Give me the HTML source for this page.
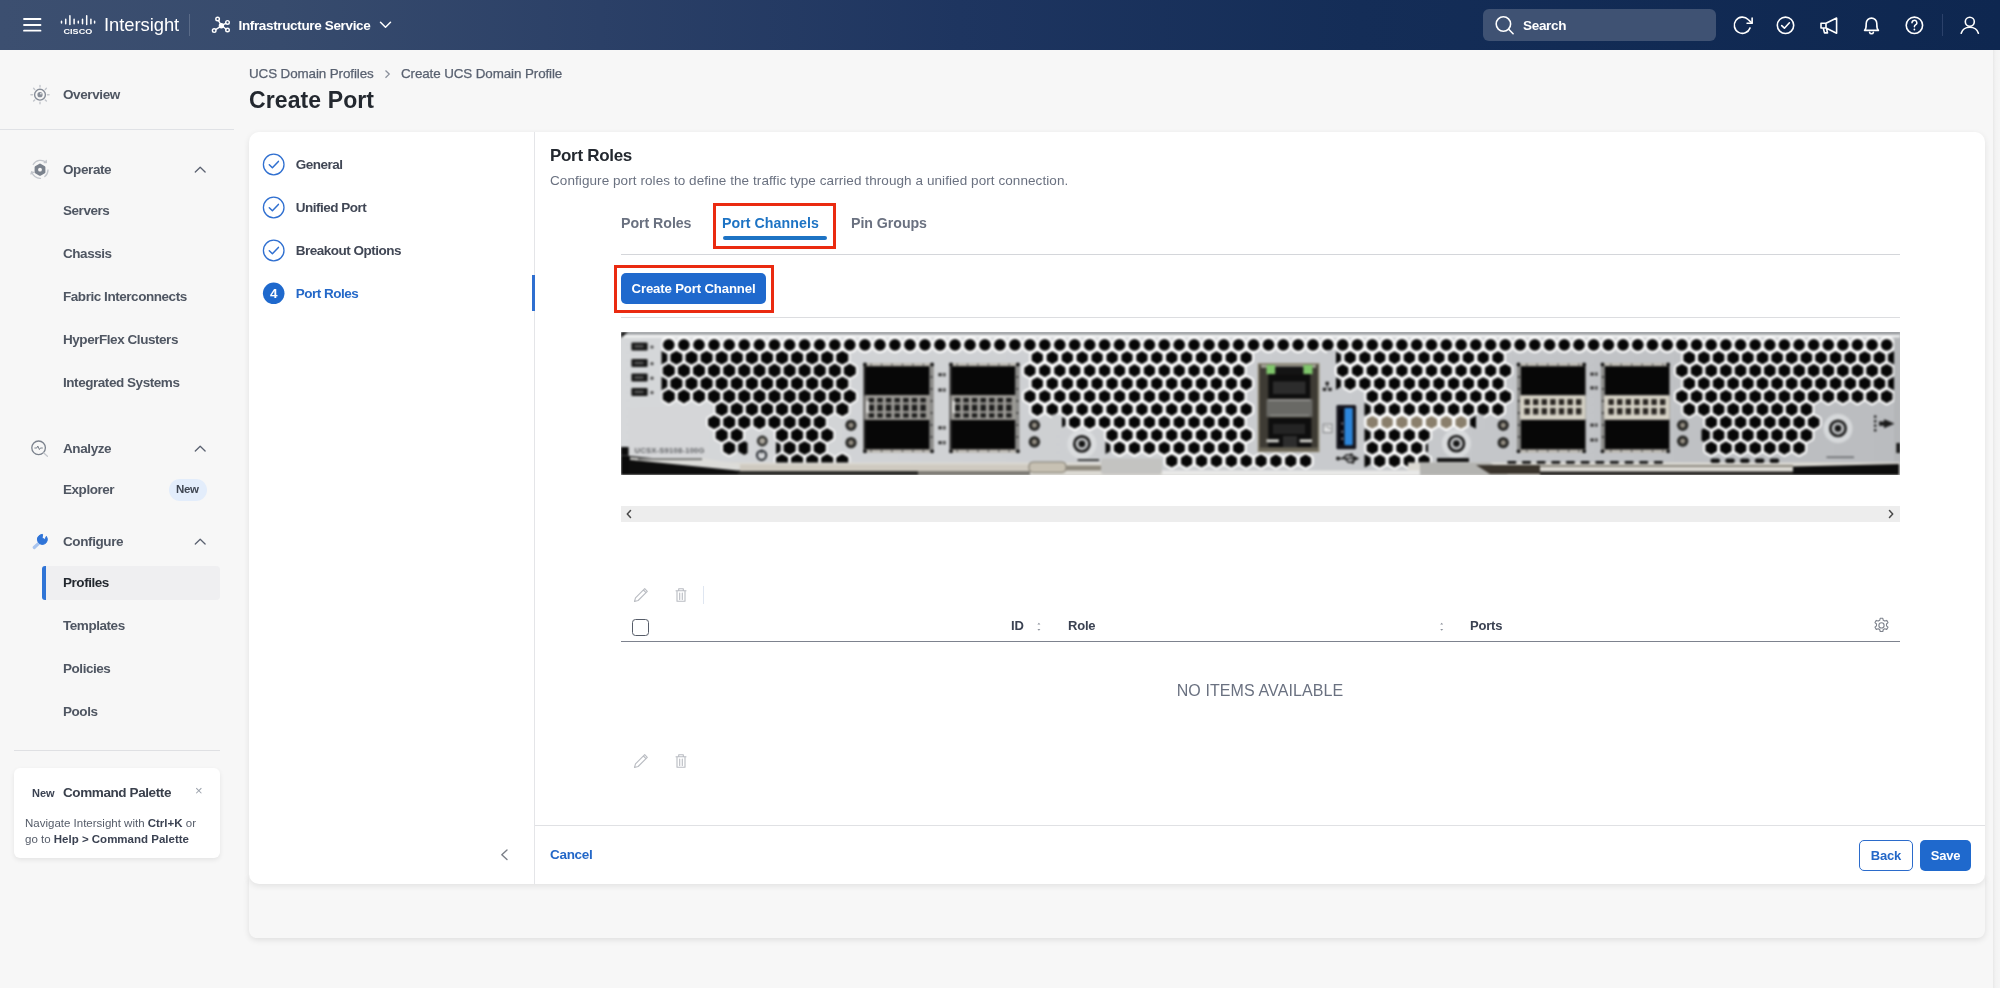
<!DOCTYPE html>
<html>
<head>
<meta charset="utf-8">
<title>Create Port</title>
<style>
*{box-sizing:border-box;margin:0;padding:0}
html,body{width:2000px;height:988px;overflow:hidden;background:#f7f7f7;font-family:"Liberation Sans",sans-serif;color:#3b4252}
.abs{position:absolute}
#hdr{position:absolute;left:0;top:0;width:2000px;height:50px;background:linear-gradient(90deg,#3c4f70 0%,#374b6d 14%,#2b4067 30%,#1e3560 48%,#142d57 68%,#0e2750 100%)}
#hdr .t{position:absolute;color:#fff;white-space:nowrap}
#side{position:absolute;left:0;top:50px;width:234px;height:938px;background:#f7f7f7}
.nav{position:absolute;left:63px;font-size:13.5px;font-weight:bold;color:#4f5662;white-space:nowrap;letter-spacing:-0.45px}
.navh{position:absolute;left:63px;font-size:13.5px;font-weight:bold;color:#4f5662;white-space:nowrap;letter-spacing:-0.4px}
.step{position:absolute;left:295.700px;font-size:13.5px;font-weight:bold;color:#414755;white-space:nowrap;letter-spacing:-0.5px}
.th{position:absolute;top:618px;font-size:13px;font-weight:bold;color:#3b4252;letter-spacing:-0.2px}
</style>
</head>
<body>
<div id="root" style="position:absolute;left:0;top:0;width:2000px;height:988px;will-change:transform;transform:translateZ(0)">
<!-- HEADER -->
<div id="hdr">
  <div class="t" style="left:104px;top:14px;font-size:18.4px;letter-spacing:-0.05px">Intersight</div>
  <div class="abs" style="left:189px;top:14px;width:1px;height:22px;background:#5a6b88"></div>
  <div class="t" style="left:238.5px;top:18px;font-size:13.5px;font-weight:bold;letter-spacing:-0.35px">Infrastructure Service</div>
  <div class="abs" style="left:1483px;top:9px;width:233px;height:32px;border-radius:6px;background:#3f5273"></div>
  <div class="t" style="left:1523px;top:18px;font-size:13.5px;font-weight:bold;letter-spacing:-0.3px">Search</div>
  <div class="abs" style="left:1942px;top:14px;width:1px;height:22px;background:#2b416a"></div>
  <svg class="abs" style="left:0;top:0" width="2000" height="50" viewBox="0 0 2000 50" fill="none" stroke="#fff" stroke-width="1.6" stroke-linecap="round" stroke-linejoin="round">
    <path d="M24 19h16.5M24 25h16.5M24 30.7h16.5" stroke-width="1.8"/>
    <g stroke-width="1.5"><path d="M61.5 21.3v1.8M65.7 19.2v4.6M69.9 15.8v8.7M74.1 19.2v4.6M78.3 21.3v1.8M82.5 19.2v4.6M86.7 15.8v8.7M90.9 19.2v4.6M94.6 21.3v1.8"/></g>
    <text x="63.6" y="33.6" font-family="Liberation Sans, sans-serif" font-size="7.6" font-weight="bold" fill="#fff" stroke="none" textLength="28.6" lengthAdjust="spacingAndGlyphs">CISCO</text>
    <g stroke-width="1.4"><path d="M218.5 20.6l2 3.4M223.2 24.7l2.6-1.4M223.2 26.8l2.7 2.2M219.6 27.2l-4 2.4"/><circle cx="217.6" cy="19" r="1.8"/><circle cx="227.5" cy="22.4" r="1.8"/><circle cx="227.5" cy="30" r="1.8"/><circle cx="214.2" cy="30.6" r="1.8"/><circle cx="221.4" cy="25.7" r="2" fill="#fff"/></g>
    <path d="M380.5 22.3l5 5 5-5" stroke-width="1.5"/>
    <circle cx="1503.4" cy="24" r="7.2"/><path d="M1508.7 29.3l4.4 4.4"/>
    <g transform="translate(1731.6 14.4) scale(.9)" stroke-width="1.8"><path d="M20.49 15a9 9 0 1 1-2.12-9.360L22.600 9.600"/><path d="M22.800 4.200v5.600h-5.600"/></g>
    <circle cx="1785.5" cy="25.3" r="8.2"/><path d="M1781.7 25.6l2.7 2.6 5-5.4"/>
    <path d="M1821 23.2h5l10.6-5.2v15.2l-10.6-5.2h-5zM1826 23.2v4.8M1823.3 28.3l1.2 4.6h3l-1-4.6"/>
    <path d="M1864.600 30.400c1.800-1.700 1.600-3.800 1.600-7a5.300 5.300 0 0 1 10.600 0c0 3.200-.2 5.300 1.600 7zM1869.600 32.400a2 2 0 0 0 3.800 0"/>
    <circle cx="1914.4" cy="25.300" r="8.200"/><path d="M1912 22.800a2.400 2.400 0 1 1 3.500 2.100c-.8.500-1.100.9-1.100 1.900" stroke-width="1.5"/><circle cx="1914.400" cy="29.500" r=".9" fill="#fff" stroke="none"/>
    <circle cx="1969.800" cy="21.800" r="4.500"/><path d="M1961.200 33.200c1.200-3.800 4.600-6 8.600-6s7.400 2.200 8.600 6"/>
  </svg>
</div>

<!-- SIDEBAR -->
<div id="side"></div>
<svg class="abs" style="left:0;top:50px" width="234" height="938" viewBox="0 50 234 938" fill="none" stroke-linecap="round" stroke-linejoin="round">
  <g stroke="#c3c6cc" stroke-width="1.400"><path d="M40 85.500v1.600M40 102.200v1.600M30.900 94.700h1.600M47.500 94.700h1.600M33.600 88.300l1.100 1.100M45.300 100l1.100 1.100M46.400 88.300l-1.100 1.100M34.700 100l-1.100 1.100"/></g>
  <circle cx="40" cy="94.700" r="5.400" stroke="#878d98" stroke-width="1.400"/><circle cx="40" cy="94.700" r="2.600" fill="#878d98"/><circle cx="40.900" cy="93.800" r=".8" fill="#f7f7f7"/>
  <g stroke="#c3c6cc" stroke-width="1.300"><path d="M33.200 164.500a8.600 8.600 0 0 1 12.800-2.200M48 170a8.600 8.600 0 0 1-3.200 6.600M40.500 178.300a8.600 8.600 0 0 1-8.800-6.600M46.200 160.300l.2 2.200-2.200.2M31 174l.6-2.200 2.200.6"/></g>
  <path d="M40 164.700l4.300 2.500v5l-4.300 2.500-4.300-2.500v-5z" stroke="#7b828d" stroke-width="2.200" fill="#7b828d"/><circle cx="40" cy="169.700" r="1.900" fill="#f7f7f7"/>
  <circle cx="38.600" cy="447.800" r="6.800" stroke="#7b828d" stroke-width="1.300"/><path d="M34.800 448h2l1-2 1.600 3.600 1-1.600h2" stroke="#7b828d" stroke-width="1"/><path d="M43.800 453l3.600 3.200" stroke="#c3c6cc" stroke-width="1.300"/>
  <path d="M39.800 542.300l-5.600 5.200" stroke="#a9c5ef" stroke-width="3.200"/>
  <path d="M46.600 536.700a5 5 0 1 1-4-2.300l-.5 3.400 2.300 1.600z" fill="#2f74d8" stroke="#2f74d8" stroke-width="1"/>
  <g stroke="#5a6170" stroke-width="1.300"><path d="M195.300 172l4.900-4.700 4.900 4.700M195.300 451l4.900-4.700 4.900 4.700M195.300 544l4.900-4.700 4.900 4.700"/></g>
</svg>
<div class="abs" style="left:0;top:129px;width:234px;height:1px;background:#e0e2e6"></div>
<div class="navh" style="top:87px;font-size:13.5px">Overview</div>
<div class="navh" style="top:162px">Operate</div>
<div class="nav" style="top:203px">Servers</div>
<div class="nav" style="top:246px">Chassis</div>
<div class="nav" style="top:289px">Fabric Interconnects</div>
<div class="nav" style="top:332px">HyperFlex Clusters</div>
<div class="nav" style="top:375px">Integrated Systems</div>
<div class="navh" style="top:441px">Analyze</div>
<div class="nav" style="top:482px">Explorer</div>
<div class="abs" style="left:168.500px;top:478.500px;width:38px;height:22px;border-radius:11px;background:#e3edfb"></div>
<div class="abs" style="left:176px;top:483px;font-size:11.500px;font-weight:bold;color:#3f4652;letter-spacing:-0.3px">New</div>
<div class="navh" style="top:534px">Configure</div>
<div class="abs" style="left:42px;top:566px;width:178px;height:34px;border-radius:4px;background:#efeff1"></div>
<div class="abs" style="left:41.500px;top:566px;width:4px;height:34px;border-radius:3px 0 0 3px;background:#2f74d6"></div>
<div class="nav" style="top:575px;color:#23282f">Profiles</div>
<div class="nav" style="top:618px">Templates</div>
<div class="nav" style="top:661px">Policies</div>
<div class="nav" style="top:704px">Pools</div>
<div class="abs" style="left:14px;top:750px;width:206px;height:1px;background:#dfe0e3"></div>
<div class="abs" style="left:14px;top:768px;width:206px;height:90px;border-radius:6px;background:#fff;box-shadow:0 2px 5px rgba(0,0,0,.08)"></div>
<div class="abs" style="left:32px;top:787px;font-size:11px;font-weight:bold;color:#3b4252">New</div>
<div class="abs" style="left:63px;top:785px;font-size:13.5px;font-weight:bold;color:#3a404c;letter-spacing:-0.400px">Command Palette</div>
<div class="abs" style="left:195px;top:783px;font-size:13px;color:#9aa0aa">&#215;</div>
<div class="abs" style="left:25px;top:814.500px;font-size:11.500px;color:#555c69;line-height:16.200px;white-space:nowrap">Navigate Intersight with <b style="color:#3b4252">Ctrl+K</b> or<br>go to <b style="color:#3b4252">Help &gt; Command Palette</b></div>

<!-- BREADCRUMB + TITLE -->
<div class="abs" style="left:249px;top:66px;font-size:13.4px;color:#596170;white-space:nowrap;letter-spacing:-0.1px;-webkit-text-stroke:0.25px #596170">UCS Domain Profiles</div>
<div class="abs" style="left:401px;top:66px;font-size:13.4px;color:#596170;white-space:nowrap;letter-spacing:-0.1px;-webkit-text-stroke:0.25px #596170">Create UCS Domain Profile</div>
<div class="abs" style="left:249px;top:87px;font-size:23px;font-weight:bold;color:#23282f;white-space:nowrap;letter-spacing:0.1px">Create Port</div>

<svg class="abs" style="left:382px;top:68px" width="12" height="12" viewBox="0 0 12 12" fill="none" stroke="#8a909b" stroke-width="1.300"><path d="M3.500 2.500l3.700 3.600-3.700 3.600"/></svg>
<!-- LOWER STRIP -->
<div class="abs" style="left:249px;top:876px;width:1736px;height:62px;border-radius:0 0 8px 8px;background:#f7f7f7;box-shadow:0 2px 6px rgba(0,0,0,.10)"></div>
<!-- CARD -->
<div class="abs" style="left:249px;top:132px;width:1736px;height:752px;border-radius:10px;background:#fff;box-shadow:0 2px 6px rgba(0,0,0,.09)"></div>
<div class="abs" style="left:534px;top:132px;width:1px;height:752px;background:#e4e5e8"></div>
<div class="abs" style="left:532px;top:275px;width:2.500px;height:36px;background:#2f6fd0"></div>

<!-- STEPS -->
<div class="step" style="top:157px">General</div>
<div class="step" style="top:200px">Unified Port</div>
<div class="step" style="top:243px">Breakout Options</div>
<div class="step" style="top:286px;color:#2468c8">Port Roles</div>

<!-- CONTENT -->
<div class="abs" style="left:550px;top:146px;font-size:17px;font-weight:bold;color:#23282f;letter-spacing:-0.3px">Port Roles</div>
<div class="abs" style="left:550px;top:173px;font-size:13.500px;color:#6a7180;white-space:nowrap;letter-spacing:0.075px">Configure port roles to define the traffic type carried through a unified port connection.</div>

<div class="abs" style="left:621px;top:215px;font-size:14.200px;font-weight:bold;color:#6a7180;letter-spacing:-0.050px">Port Roles</div>
<div class="abs" style="left:722px;top:215px;font-size:14.200px;font-weight:bold;color:#1d73c4;letter-spacing:0.050px">Port Channels</div>
<div class="abs" style="left:851px;top:215px;font-size:14.200px;font-weight:bold;color:#6a7180;letter-spacing:-0.050px">Pin Groups</div>
<div class="abs" style="left:722.500px;top:236px;width:104px;height:3.500px;border-radius:2px;background:#1d73c4"></div>
<div class="abs" style="left:621px;top:254px;width:1279px;height:1px;background:#d4d6da"></div>
<div class="abs" style="left:713px;top:203px;width:123px;height:46px;border:3px solid #ea2a10"></div>

<div class="abs" style="left:621px;top:273px;width:145px;height:31px;border-radius:5px;background:#1f69cd"></div>
<div class="abs" style="left:621px;top:281px;width:145px;text-align:center;font-size:13.200px;font-weight:bold;color:#fff;letter-spacing:-0.150px">Create Port Channel</div>
<div class="abs" style="left:614px;top:265px;width:160px;height:48px;border:3px solid #ea2a10"></div>
<div class="abs" style="left:621px;top:317px;width:1279px;height:1px;background:#dcdde0"></div>

<!-- HARDWARE -->
<!--HW0--><svg width="1279" height="143" viewBox="621 332 1279 143" style="position:absolute;left:621px;top:332px;display:block">
<defs>
<linearGradient id="mt" x1="0" y1="0" x2="1" y2="0"><stop offset="0" stop-color="#d6d8da"/><stop offset=".5" stop-color="#cacccf"/><stop offset="1" stop-color="#babcbf"/></linearGradient>
<radialGradient id="led"><stop offset="0" stop-color="#a39d91"/><stop offset=".40" stop-color="#857f75"/><stop offset=".52" stop-color="#222220"/><stop offset=".92" stop-color="#2c2c2a"/><stop offset="1" stop-color="#6a6c6d"/></radialGradient>
<radialGradient id="scr"><stop offset="0" stop-color="#77797c"/><stop offset=".30" stop-color="#8d8f92"/><stop offset=".36" stop-color="#303234"/><stop offset=".52" stop-color="#4a4c4e"/><stop offset=".58" stop-color="#dfe0e1"/><stop offset=".85" stop-color="#d9dadb"/><stop offset="1" stop-color="#c8cacc" stop-opacity="0"/></radialGradient>
<filter id="bl" x="0" y="0" width="1" height="1" color-interpolation-filters="sRGB"><feGaussianBlur stdDeviation="0.8"/></filter>
<clipPath id="cp"><path d="M661.5 336H1894V463H1408V469.500H1162V463H661.5z"/></clipPath>
</defs>
<g filter="url(#bl)">
<rect x="616" y="327" width="1289" height="153" fill="url(#mt)"/>
<rect x="621" y="332" width="1279" height="2.6" fill="#8d9093"/>
<rect x="621" y="334.6" width="1279" height="3" fill="#f1f2f2"/>
<path d="M621 332h7l-7 6z" fill="#111"/>
<rect x="629.5" y="407.5" width="79.5" height="51" fill="#d5d6d8"/>
<g clip-path="url(#cp)">
<g fill="#ffffff" stroke="#ffffff" stroke-width="7" stroke-linejoin="round">
<path d="M676.4 352.5l4.50 2.60v5.20l-4.50 2.60l-4.50 -2.60v-5.20zM691.5 352.5l4.50 2.60v5.20l-4.50 2.60l-4.50 -2.60v-5.20zM706.6 352.5l4.50 2.60v5.20l-4.50 2.60l-4.50 -2.60v-5.20zM721.7 352.5l4.50 2.60v5.20l-4.50 2.60l-4.50 -2.60v-5.20zM736.8 352.5l4.50 2.60v5.20l-4.50 2.60l-4.50 -2.60v-5.20zM751.9 352.5l4.50 2.60v5.20l-4.50 2.60l-4.50 -2.60v-5.20zM767.0 352.5l4.50 2.60v5.20l-4.50 2.60l-4.50 -2.60v-5.20zM782.0 352.5l4.50 2.60v5.20l-4.50 2.60l-4.50 -2.60v-5.20zM797.1 352.5l4.50 2.60v5.20l-4.50 2.60l-4.50 -2.60v-5.20zM812.2 352.5l4.50 2.60v5.20l-4.50 2.60l-4.50 -2.60v-5.20zM827.2 352.5l4.50 2.60v5.20l-4.50 2.60l-4.50 -2.60v-5.20zM842.3 352.5l4.50 2.60v5.20l-4.50 2.60l-4.50 -2.60v-5.20zM1037.3 352.5l4.50 2.60v5.20l-4.50 2.60l-4.50 -2.60v-5.20zM1052.3 352.5l4.50 2.60v5.20l-4.50 2.60l-4.50 -2.60v-5.20zM1067.3 352.5l4.50 2.60v5.20l-4.50 2.60l-4.50 -2.60v-5.20zM1082.2 352.5l4.50 2.60v5.20l-4.50 2.60l-4.50 -2.60v-5.20zM1097.1 352.5l4.50 2.60v5.20l-4.50 2.60l-4.50 -2.60v-5.20zM1112.1 352.5l4.50 2.60v5.20l-4.50 2.60l-4.50 -2.60v-5.20zM1127.0 352.5l4.50 2.60v5.20l-4.50 2.60l-4.50 -2.60v-5.20zM1141.9 352.5l4.50 2.60v5.20l-4.50 2.60l-4.50 -2.60v-5.20zM1156.8 352.5l4.50 2.60v5.20l-4.50 2.60l-4.50 -2.60v-5.20zM1171.7 352.5l4.50 2.60v5.20l-4.50 2.60l-4.50 -2.60v-5.20zM1186.6 352.5l4.50 2.60v5.20l-4.50 2.60l-4.50 -2.60v-5.20zM1201.5 352.5l4.50 2.60v5.20l-4.50 2.60l-4.50 -2.60v-5.20zM1216.4 352.5l4.50 2.60v5.20l-4.50 2.60l-4.50 -2.60v-5.20zM1231.3 352.5l4.50 2.60v5.20l-4.50 2.60l-4.50 -2.60v-5.20zM1246.2 352.5l4.50 2.60v5.20l-4.50 2.60l-4.50 -2.60v-5.20zM1350.1 352.5l4.50 2.60v5.20l-4.50 2.60l-4.50 -2.60v-5.20zM1364.9 352.5l4.50 2.60v5.20l-4.50 2.60l-4.50 -2.60v-5.20zM1379.7 352.5l4.50 2.60v5.20l-4.50 2.60l-4.50 -2.60v-5.20zM1394.5 352.5l4.50 2.60v5.20l-4.50 2.60l-4.50 -2.60v-5.20zM1409.3 352.5l4.50 2.60v5.20l-4.50 2.60l-4.50 -2.60v-5.20zM1424.1 352.5l4.50 2.60v5.20l-4.50 2.60l-4.50 -2.60v-5.20zM1438.9 352.5l4.50 2.60v5.20l-4.50 2.60l-4.50 -2.60v-5.20zM1453.7 352.5l4.50 2.60v5.20l-4.50 2.60l-4.50 -2.60v-5.20zM1468.4 352.5l4.50 2.60v5.20l-4.50 2.60l-4.50 -2.60v-5.20zM1483.2 352.5l4.50 2.60v5.20l-4.50 2.60l-4.50 -2.60v-5.20zM1498.0 352.5l4.50 2.60v5.20l-4.50 2.60l-4.50 -2.60v-5.20zM1689.2 352.5l4.50 2.60v5.20l-4.50 2.60l-4.50 -2.60v-5.20zM1703.9 352.5l4.50 2.60v5.20l-4.50 2.60l-4.50 -2.60v-5.20zM1718.6 352.5l4.50 2.60v5.20l-4.50 2.60l-4.50 -2.60v-5.20zM1733.2 352.5l4.50 2.60v5.20l-4.50 2.60l-4.50 -2.60v-5.20zM1747.8 352.5l4.50 2.60v5.20l-4.50 2.60l-4.50 -2.60v-5.20zM1762.5 352.5l4.50 2.60v5.20l-4.50 2.60l-4.50 -2.60v-5.20zM1777.1 352.5l4.50 2.60v5.20l-4.50 2.60l-4.50 -2.60v-5.20zM1791.7 352.5l4.50 2.60v5.20l-4.50 2.60l-4.50 -2.60v-5.20zM1806.4 352.5l4.50 2.60v5.20l-4.50 2.60l-4.50 -2.60v-5.20zM1821.0 352.5l4.50 2.60v5.20l-4.50 2.60l-4.50 -2.60v-5.20zM1835.6 352.5l4.50 2.60v5.20l-4.50 2.60l-4.50 -2.60v-5.20zM1850.2 352.5l4.50 2.60v5.20l-4.50 2.60l-4.50 -2.60v-5.20zM1864.8 352.5l4.50 2.60v5.20l-4.50 2.60l-4.50 -2.60v-5.20zM1879.4 352.5l4.50 2.60v5.20l-4.50 2.60l-4.50 -2.60v-5.20zM668.8 365.4l4.50 2.60v5.20l-4.50 2.60l-4.50 -2.60v-5.20zM683.9 365.4l4.50 2.60v5.20l-4.50 2.60l-4.50 -2.60v-5.20zM699.0 365.4l4.50 2.60v5.20l-4.50 2.60l-4.50 -2.60v-5.20zM714.1 365.4l4.50 2.60v5.20l-4.50 2.60l-4.50 -2.60v-5.20zM729.2 365.4l4.50 2.60v5.20l-4.50 2.60l-4.50 -2.60v-5.20zM744.3 365.4l4.50 2.60v5.20l-4.50 2.60l-4.50 -2.60v-5.20zM759.4 365.4l4.50 2.60v5.20l-4.50 2.60l-4.50 -2.60v-5.20zM774.5 365.4l4.50 2.60v5.20l-4.50 2.60l-4.50 -2.60v-5.20zM789.6 365.4l4.50 2.60v5.20l-4.50 2.60l-4.50 -2.60v-5.20zM804.6 365.4l4.50 2.60v5.20l-4.50 2.60l-4.50 -2.60v-5.20zM819.7 365.4l4.50 2.60v5.20l-4.50 2.60l-4.50 -2.60v-5.20zM834.8 365.4l4.50 2.60v5.20l-4.50 2.60l-4.50 -2.60v-5.20zM849.8 365.4l4.50 2.60v5.20l-4.50 2.60l-4.50 -2.60v-5.20zM1029.9 365.4l4.50 2.60v5.20l-4.50 2.60l-4.50 -2.60v-5.20zM1044.8 365.4l4.50 2.60v5.20l-4.50 2.60l-4.50 -2.60v-5.20zM1059.8 365.4l4.50 2.60v5.20l-4.50 2.60l-4.50 -2.60v-5.20zM1074.7 365.4l4.50 2.60v5.20l-4.50 2.60l-4.50 -2.60v-5.20zM1089.7 365.4l4.50 2.60v5.20l-4.50 2.60l-4.50 -2.60v-5.20zM1104.6 365.4l4.50 2.60v5.20l-4.50 2.60l-4.50 -2.60v-5.20zM1119.5 365.4l4.50 2.60v5.20l-4.50 2.60l-4.50 -2.60v-5.20zM1134.5 365.4l4.50 2.60v5.20l-4.50 2.60l-4.50 -2.60v-5.20zM1149.4 365.4l4.50 2.60v5.20l-4.50 2.60l-4.50 -2.60v-5.20zM1164.3 365.4l4.50 2.60v5.20l-4.50 2.60l-4.50 -2.60v-5.20zM1179.2 365.4l4.50 2.60v5.20l-4.50 2.60l-4.50 -2.60v-5.20zM1194.1 365.4l4.50 2.60v5.20l-4.50 2.60l-4.50 -2.60v-5.20zM1209.0 365.4l4.50 2.60v5.20l-4.50 2.60l-4.50 -2.60v-5.20zM1223.8 365.4l4.50 2.60v5.20l-4.50 2.60l-4.50 -2.60v-5.20zM1238.7 365.4l4.50 2.60v5.20l-4.50 2.60l-4.50 -2.60v-5.20zM1342.7 365.4l4.50 2.60v5.20l-4.50 2.60l-4.50 -2.60v-5.20zM1357.5 365.4l4.50 2.60v5.20l-4.50 2.60l-4.50 -2.60v-5.20zM1372.3 365.4l4.50 2.60v5.20l-4.50 2.60l-4.50 -2.60v-5.20zM1387.1 365.4l4.50 2.60v5.20l-4.50 2.60l-4.50 -2.60v-5.20zM1401.9 365.4l4.50 2.60v5.20l-4.50 2.60l-4.50 -2.60v-5.20zM1416.7 365.4l4.50 2.60v5.20l-4.50 2.60l-4.50 -2.60v-5.20zM1431.5 365.4l4.50 2.60v5.20l-4.50 2.60l-4.50 -2.60v-5.20zM1446.3 365.4l4.50 2.60v5.20l-4.50 2.60l-4.50 -2.60v-5.20zM1461.1 365.4l4.50 2.60v5.20l-4.50 2.60l-4.50 -2.60v-5.20zM1475.8 365.4l4.50 2.60v5.20l-4.50 2.60l-4.50 -2.60v-5.20zM1490.6 365.4l4.50 2.60v5.20l-4.50 2.60l-4.50 -2.60v-5.20zM1505.3 365.4l4.50 2.60v5.20l-4.50 2.60l-4.50 -2.60v-5.20zM1681.9 365.4l4.50 2.60v5.20l-4.50 2.60l-4.50 -2.60v-5.20zM1696.6 365.4l4.50 2.60v5.20l-4.50 2.60l-4.50 -2.60v-5.20zM1711.2 365.4l4.50 2.60v5.20l-4.50 2.60l-4.50 -2.60v-5.20zM1725.9 365.4l4.50 2.60v5.20l-4.50 2.60l-4.50 -2.60v-5.20zM1740.5 365.4l4.50 2.60v5.20l-4.50 2.60l-4.50 -2.60v-5.20zM1755.2 365.4l4.50 2.60v5.20l-4.50 2.60l-4.50 -2.60v-5.20zM1769.8 365.4l4.50 2.60v5.20l-4.50 2.60l-4.50 -2.60v-5.20zM1784.4 365.4l4.50 2.60v5.20l-4.50 2.60l-4.50 -2.60v-5.20zM1799.1 365.4l4.50 2.60v5.20l-4.50 2.60l-4.50 -2.60v-5.20zM1813.7 365.4l4.50 2.60v5.20l-4.50 2.60l-4.50 -2.60v-5.20zM1828.3 365.4l4.50 2.60v5.20l-4.50 2.60l-4.50 -2.60v-5.20zM1842.9 365.4l4.50 2.60v5.20l-4.50 2.60l-4.50 -2.60v-5.20zM1857.5 365.4l4.50 2.60v5.20l-4.50 2.60l-4.50 -2.60v-5.20zM1872.1 365.4l4.50 2.60v5.20l-4.50 2.60l-4.50 -2.60v-5.20zM1886.7 365.4l4.50 2.60v5.20l-4.50 2.60l-4.50 -2.60v-5.20zM676.4 378.3l4.50 2.60v5.20l-4.50 2.60l-4.50 -2.60v-5.20zM691.5 378.3l4.50 2.60v5.20l-4.50 2.60l-4.50 -2.60v-5.20zM706.6 378.3l4.50 2.60v5.20l-4.50 2.60l-4.50 -2.60v-5.20zM721.7 378.3l4.50 2.60v5.20l-4.50 2.60l-4.50 -2.60v-5.20zM736.8 378.3l4.50 2.60v5.20l-4.50 2.60l-4.50 -2.60v-5.20zM751.9 378.3l4.50 2.60v5.20l-4.50 2.60l-4.50 -2.60v-5.20zM767.0 378.3l4.50 2.60v5.20l-4.50 2.60l-4.50 -2.60v-5.20zM782.0 378.3l4.50 2.60v5.20l-4.50 2.60l-4.50 -2.60v-5.20zM797.1 378.3l4.50 2.60v5.20l-4.50 2.60l-4.50 -2.60v-5.20zM812.2 378.3l4.50 2.60v5.20l-4.50 2.60l-4.50 -2.60v-5.20zM827.2 378.3l4.50 2.60v5.20l-4.50 2.60l-4.50 -2.60v-5.20zM842.3 378.3l4.50 2.60v5.20l-4.50 2.60l-4.50 -2.60v-5.20zM1037.3 378.3l4.50 2.60v5.20l-4.50 2.60l-4.50 -2.60v-5.20zM1052.3 378.3l4.50 2.60v5.20l-4.50 2.60l-4.50 -2.60v-5.20zM1067.3 378.3l4.50 2.60v5.20l-4.50 2.60l-4.50 -2.60v-5.20zM1082.2 378.3l4.50 2.60v5.20l-4.50 2.60l-4.50 -2.60v-5.20zM1097.1 378.3l4.50 2.60v5.20l-4.50 2.60l-4.50 -2.60v-5.20zM1112.1 378.3l4.50 2.60v5.20l-4.50 2.60l-4.50 -2.60v-5.20zM1127.0 378.3l4.50 2.60v5.20l-4.50 2.60l-4.50 -2.60v-5.20zM1141.9 378.3l4.50 2.60v5.20l-4.50 2.60l-4.50 -2.60v-5.20zM1156.8 378.3l4.50 2.60v5.20l-4.50 2.60l-4.50 -2.60v-5.20zM1171.7 378.3l4.50 2.60v5.20l-4.50 2.60l-4.50 -2.60v-5.20zM1186.6 378.3l4.50 2.60v5.20l-4.50 2.60l-4.50 -2.60v-5.20zM1201.5 378.3l4.50 2.60v5.20l-4.50 2.60l-4.50 -2.60v-5.20zM1216.4 378.3l4.50 2.60v5.20l-4.50 2.60l-4.50 -2.60v-5.20zM1231.3 378.3l4.50 2.60v5.20l-4.50 2.60l-4.50 -2.60v-5.20zM1246.2 378.3l4.50 2.60v5.20l-4.50 2.60l-4.50 -2.60v-5.20zM1350.1 378.3l4.50 2.60v5.20l-4.50 2.60l-4.50 -2.60v-5.20zM1364.9 378.3l4.50 2.60v5.20l-4.50 2.60l-4.50 -2.60v-5.20zM1379.7 378.3l4.50 2.60v5.20l-4.50 2.60l-4.50 -2.60v-5.20zM1394.5 378.3l4.50 2.60v5.20l-4.50 2.60l-4.50 -2.60v-5.20zM1409.3 378.3l4.50 2.60v5.20l-4.50 2.60l-4.50 -2.60v-5.20zM1424.1 378.3l4.50 2.60v5.20l-4.50 2.60l-4.50 -2.60v-5.20zM1438.9 378.3l4.50 2.60v5.20l-4.50 2.60l-4.50 -2.60v-5.20zM1453.7 378.3l4.50 2.60v5.20l-4.50 2.60l-4.50 -2.60v-5.20zM1468.4 378.3l4.50 2.60v5.20l-4.50 2.60l-4.50 -2.60v-5.20zM1483.2 378.3l4.50 2.60v5.20l-4.50 2.60l-4.50 -2.60v-5.20zM1498.0 378.3l4.50 2.60v5.20l-4.50 2.60l-4.50 -2.60v-5.20zM1689.2 378.3l4.50 2.60v5.20l-4.50 2.60l-4.50 -2.60v-5.20zM1703.9 378.3l4.50 2.60v5.20l-4.50 2.60l-4.50 -2.60v-5.20zM1718.6 378.3l4.50 2.60v5.20l-4.50 2.60l-4.50 -2.60v-5.20zM1733.2 378.3l4.50 2.60v5.20l-4.50 2.60l-4.50 -2.60v-5.20zM1747.8 378.3l4.50 2.60v5.20l-4.50 2.60l-4.50 -2.60v-5.20zM1762.5 378.3l4.50 2.60v5.20l-4.50 2.60l-4.50 -2.60v-5.20zM1777.1 378.3l4.50 2.60v5.20l-4.50 2.60l-4.50 -2.60v-5.20zM1791.7 378.3l4.50 2.60v5.20l-4.50 2.60l-4.50 -2.60v-5.20zM1806.4 378.3l4.50 2.60v5.20l-4.50 2.60l-4.50 -2.60v-5.20zM1821.0 378.3l4.50 2.60v5.20l-4.50 2.60l-4.50 -2.60v-5.20zM1835.6 378.3l4.50 2.60v5.20l-4.50 2.60l-4.50 -2.60v-5.20zM1850.2 378.3l4.50 2.60v5.20l-4.50 2.60l-4.50 -2.60v-5.20zM1864.8 378.3l4.50 2.60v5.20l-4.50 2.60l-4.50 -2.60v-5.20zM1879.4 378.3l4.50 2.60v5.20l-4.50 2.60l-4.50 -2.60v-5.20zM668.8 391.2l4.50 2.60v5.20l-4.50 2.60l-4.50 -2.60v-5.20zM683.9 391.2l4.50 2.60v5.20l-4.50 2.60l-4.50 -2.60v-5.20zM699.0 391.2l4.50 2.60v5.20l-4.50 2.60l-4.50 -2.60v-5.20zM714.1 391.2l4.50 2.60v5.20l-4.50 2.60l-4.50 -2.60v-5.20zM729.2 391.2l4.50 2.60v5.20l-4.50 2.60l-4.50 -2.60v-5.20zM744.3 391.2l4.50 2.60v5.20l-4.50 2.60l-4.50 -2.60v-5.20zM759.4 391.2l4.50 2.60v5.20l-4.50 2.60l-4.50 -2.60v-5.20zM774.5 391.2l4.50 2.60v5.20l-4.50 2.60l-4.50 -2.60v-5.20zM789.6 391.2l4.50 2.60v5.20l-4.50 2.60l-4.50 -2.60v-5.20zM804.6 391.2l4.50 2.60v5.20l-4.50 2.60l-4.50 -2.60v-5.20zM819.7 391.2l4.50 2.60v5.20l-4.50 2.60l-4.50 -2.60v-5.20zM834.8 391.2l4.50 2.60v5.20l-4.50 2.60l-4.50 -2.60v-5.20zM849.8 391.2l4.50 2.60v5.20l-4.50 2.60l-4.50 -2.60v-5.20zM1029.9 391.2l4.50 2.60v5.20l-4.50 2.60l-4.50 -2.60v-5.20zM1044.8 391.2l4.50 2.60v5.20l-4.50 2.60l-4.50 -2.60v-5.20zM1059.8 391.2l4.50 2.60v5.20l-4.50 2.60l-4.50 -2.60v-5.20zM1074.7 391.2l4.50 2.60v5.20l-4.50 2.60l-4.50 -2.60v-5.20zM1089.7 391.2l4.50 2.60v5.20l-4.50 2.60l-4.50 -2.60v-5.20zM1104.6 391.2l4.50 2.60v5.20l-4.50 2.60l-4.50 -2.60v-5.20zM1119.5 391.2l4.50 2.60v5.20l-4.50 2.60l-4.50 -2.60v-5.20zM1134.5 391.2l4.50 2.60v5.20l-4.50 2.60l-4.50 -2.60v-5.20zM1149.4 391.2l4.50 2.60v5.20l-4.50 2.60l-4.50 -2.60v-5.20zM1164.3 391.2l4.50 2.60v5.20l-4.50 2.60l-4.50 -2.60v-5.20zM1179.2 391.2l4.50 2.60v5.20l-4.50 2.60l-4.50 -2.60v-5.20zM1194.1 391.2l4.50 2.60v5.20l-4.50 2.60l-4.50 -2.60v-5.20zM1209.0 391.2l4.50 2.60v5.20l-4.50 2.60l-4.50 -2.60v-5.20zM1223.8 391.2l4.50 2.60v5.20l-4.50 2.60l-4.50 -2.60v-5.20zM1238.7 391.2l4.50 2.60v5.20l-4.50 2.60l-4.50 -2.60v-5.20zM1372.3 391.2l4.50 2.60v5.20l-4.50 2.60l-4.50 -2.60v-5.20zM1387.1 391.2l4.50 2.60v5.20l-4.50 2.60l-4.50 -2.60v-5.20zM1401.9 391.2l4.50 2.60v5.20l-4.50 2.60l-4.50 -2.60v-5.20zM1416.7 391.2l4.50 2.60v5.20l-4.50 2.60l-4.50 -2.60v-5.20zM1431.5 391.2l4.50 2.60v5.20l-4.50 2.60l-4.50 -2.60v-5.20zM1446.3 391.2l4.50 2.60v5.20l-4.50 2.60l-4.50 -2.60v-5.20zM1461.1 391.2l4.50 2.60v5.20l-4.50 2.60l-4.50 -2.60v-5.20zM1475.8 391.2l4.50 2.60v5.20l-4.50 2.60l-4.50 -2.60v-5.20zM1490.6 391.2l4.50 2.60v5.20l-4.50 2.60l-4.50 -2.60v-5.20zM1505.3 391.2l4.50 2.60v5.20l-4.50 2.60l-4.50 -2.60v-5.20zM1681.9 391.2l4.50 2.60v5.20l-4.50 2.60l-4.50 -2.60v-5.20zM1696.6 391.2l4.50 2.60v5.20l-4.50 2.60l-4.50 -2.60v-5.20zM1711.2 391.2l4.50 2.60v5.20l-4.50 2.60l-4.50 -2.60v-5.20zM1725.9 391.2l4.50 2.60v5.20l-4.50 2.60l-4.50 -2.60v-5.20zM1740.5 391.2l4.50 2.60v5.20l-4.50 2.60l-4.50 -2.60v-5.20zM1755.2 391.2l4.50 2.60v5.20l-4.50 2.60l-4.50 -2.60v-5.20zM1769.8 391.2l4.50 2.60v5.20l-4.50 2.60l-4.50 -2.60v-5.20zM1784.4 391.2l4.50 2.60v5.20l-4.50 2.60l-4.50 -2.60v-5.20zM1799.1 391.2l4.50 2.60v5.20l-4.50 2.60l-4.50 -2.60v-5.20zM1813.7 391.2l4.50 2.60v5.20l-4.50 2.60l-4.50 -2.60v-5.20zM1828.3 391.2l4.50 2.60v5.20l-4.50 2.60l-4.50 -2.60v-5.20zM1842.9 391.2l4.50 2.60v5.20l-4.50 2.60l-4.50 -2.60v-5.20zM1857.5 391.2l4.50 2.60v5.20l-4.50 2.60l-4.50 -2.60v-5.20zM1872.1 391.2l4.50 2.60v5.20l-4.50 2.60l-4.50 -2.60v-5.20zM1886.7 391.2l4.50 2.60v5.20l-4.50 2.60l-4.50 -2.60v-5.20zM721.7 404.1l4.50 2.60v5.20l-4.50 2.60l-4.50 -2.60v-5.20zM736.8 404.1l4.50 2.60v5.20l-4.50 2.60l-4.50 -2.60v-5.20zM751.9 404.1l4.50 2.60v5.20l-4.50 2.60l-4.50 -2.60v-5.20zM767.0 404.1l4.50 2.60v5.20l-4.50 2.60l-4.50 -2.60v-5.20zM782.0 404.1l4.50 2.60v5.20l-4.50 2.60l-4.50 -2.60v-5.20zM797.1 404.1l4.50 2.60v5.20l-4.50 2.60l-4.50 -2.60v-5.20zM812.2 404.1l4.50 2.60v5.20l-4.50 2.60l-4.50 -2.60v-5.20zM827.2 404.1l4.50 2.60v5.20l-4.50 2.60l-4.50 -2.60v-5.20zM842.3 404.1l4.50 2.60v5.20l-4.50 2.60l-4.50 -2.60v-5.20zM1037.3 404.1l4.50 2.60v5.20l-4.50 2.60l-4.50 -2.60v-5.20zM1052.3 404.1l4.50 2.60v5.20l-4.50 2.60l-4.50 -2.60v-5.20zM1067.3 404.1l4.50 2.60v5.20l-4.50 2.60l-4.50 -2.60v-5.20zM1082.2 404.1l4.50 2.60v5.20l-4.50 2.60l-4.50 -2.60v-5.20zM1097.1 404.1l4.50 2.60v5.20l-4.50 2.60l-4.50 -2.60v-5.20zM1112.1 404.1l4.50 2.60v5.20l-4.50 2.60l-4.50 -2.60v-5.20zM1127.0 404.1l4.50 2.60v5.20l-4.50 2.60l-4.50 -2.60v-5.20zM1141.9 404.1l4.50 2.60v5.20l-4.50 2.60l-4.50 -2.60v-5.20zM1156.8 404.1l4.50 2.60v5.20l-4.50 2.60l-4.50 -2.60v-5.20zM1171.7 404.1l4.50 2.60v5.20l-4.50 2.60l-4.50 -2.60v-5.20zM1186.6 404.1l4.50 2.60v5.20l-4.50 2.60l-4.50 -2.60v-5.20zM1201.5 404.1l4.50 2.60v5.20l-4.50 2.60l-4.50 -2.60v-5.20zM1216.4 404.1l4.50 2.60v5.20l-4.50 2.60l-4.50 -2.60v-5.20zM1231.3 404.1l4.50 2.60v5.20l-4.50 2.60l-4.50 -2.60v-5.20zM1246.2 404.1l4.50 2.60v5.20l-4.50 2.60l-4.50 -2.60v-5.20zM1379.7 404.1l4.50 2.60v5.20l-4.50 2.60l-4.50 -2.60v-5.20zM1394.5 404.1l4.50 2.60v5.20l-4.50 2.60l-4.50 -2.60v-5.20zM1409.3 404.1l4.50 2.60v5.20l-4.50 2.60l-4.50 -2.60v-5.20zM1424.1 404.1l4.50 2.60v5.20l-4.50 2.60l-4.50 -2.60v-5.20zM1438.9 404.1l4.50 2.60v5.20l-4.50 2.60l-4.50 -2.60v-5.20zM1453.7 404.1l4.50 2.60v5.20l-4.50 2.60l-4.50 -2.60v-5.20zM1468.4 404.1l4.50 2.60v5.20l-4.50 2.60l-4.50 -2.60v-5.20zM1483.2 404.1l4.50 2.60v5.20l-4.50 2.60l-4.50 -2.60v-5.20zM1498.0 404.1l4.50 2.60v5.20l-4.50 2.60l-4.50 -2.60v-5.20zM1689.2 404.1l4.50 2.60v5.20l-4.50 2.60l-4.50 -2.60v-5.20zM1703.9 404.1l4.50 2.60v5.20l-4.50 2.60l-4.50 -2.60v-5.20zM1718.6 404.1l4.50 2.60v5.20l-4.50 2.60l-4.50 -2.60v-5.20zM1733.2 404.1l4.50 2.60v5.20l-4.50 2.60l-4.50 -2.60v-5.20zM1747.8 404.1l4.50 2.60v5.20l-4.50 2.60l-4.50 -2.60v-5.20zM1762.5 404.1l4.50 2.60v5.20l-4.50 2.60l-4.50 -2.60v-5.20zM1777.1 404.1l4.50 2.60v5.20l-4.50 2.60l-4.50 -2.60v-5.20zM1791.7 404.1l4.50 2.60v5.20l-4.50 2.60l-4.50 -2.60v-5.20zM1806.4 404.1l4.50 2.60v5.20l-4.50 2.60l-4.50 -2.60v-5.20zM714.1 417.0l4.50 2.60v5.20l-4.50 2.60l-4.50 -2.60v-5.20zM729.2 417.0l4.50 2.60v5.20l-4.50 2.60l-4.50 -2.60v-5.20zM744.3 417.0l4.50 2.60v5.20l-4.50 2.60l-4.50 -2.60v-5.20zM759.4 417.0l4.50 2.60v5.20l-4.50 2.60l-4.50 -2.60v-5.20zM774.5 417.0l4.50 2.60v5.20l-4.50 2.60l-4.50 -2.60v-5.20zM789.6 417.0l4.50 2.60v5.20l-4.50 2.60l-4.50 -2.60v-5.20zM804.6 417.0l4.50 2.60v5.20l-4.50 2.60l-4.50 -2.60v-5.20zM819.7 417.0l4.50 2.60v5.20l-4.50 2.60l-4.50 -2.60v-5.20zM1074.7 417.0l4.50 2.60v5.20l-4.50 2.60l-4.50 -2.60v-5.20zM1089.7 417.0l4.50 2.60v5.20l-4.50 2.60l-4.50 -2.60v-5.20zM1104.6 417.0l4.50 2.60v5.20l-4.50 2.60l-4.50 -2.60v-5.20zM1119.5 417.0l4.50 2.60v5.20l-4.50 2.60l-4.50 -2.60v-5.20zM1134.5 417.0l4.50 2.60v5.20l-4.50 2.60l-4.50 -2.60v-5.20zM1149.4 417.0l4.50 2.60v5.20l-4.50 2.60l-4.50 -2.60v-5.20zM1164.3 417.0l4.50 2.60v5.20l-4.50 2.60l-4.50 -2.60v-5.20zM1179.2 417.0l4.50 2.60v5.20l-4.50 2.60l-4.50 -2.60v-5.20zM1194.1 417.0l4.50 2.60v5.20l-4.50 2.60l-4.50 -2.60v-5.20zM1209.0 417.0l4.50 2.60v5.20l-4.50 2.60l-4.50 -2.60v-5.20zM1223.8 417.0l4.50 2.60v5.20l-4.50 2.60l-4.50 -2.60v-5.20zM1238.7 417.0l4.50 2.60v5.20l-4.50 2.60l-4.50 -2.60v-5.20zM1711.2 417.0l4.50 2.60v5.20l-4.50 2.60l-4.50 -2.60v-5.20zM1725.9 417.0l4.50 2.60v5.20l-4.50 2.60l-4.50 -2.60v-5.20zM1740.5 417.0l4.50 2.60v5.20l-4.50 2.60l-4.50 -2.60v-5.20zM1755.2 417.0l4.50 2.60v5.20l-4.50 2.60l-4.50 -2.60v-5.20zM1769.8 417.0l4.50 2.60v5.20l-4.50 2.60l-4.50 -2.60v-5.20zM1784.4 417.0l4.50 2.60v5.20l-4.50 2.60l-4.50 -2.60v-5.20zM1799.1 417.0l4.50 2.60v5.20l-4.50 2.60l-4.50 -2.60v-5.20zM1813.7 417.0l4.50 2.60v5.20l-4.50 2.60l-4.50 -2.60v-5.20zM721.7 429.9l4.50 2.60v5.20l-4.50 2.60l-4.50 -2.60v-5.20zM736.8 429.9l4.50 2.60v5.20l-4.50 2.60l-4.50 -2.60v-5.20zM782.0 429.9l4.50 2.60v5.20l-4.50 2.60l-4.50 -2.60v-5.20zM797.1 429.9l4.50 2.60v5.20l-4.50 2.60l-4.50 -2.60v-5.20zM812.2 429.9l4.50 2.60v5.20l-4.50 2.60l-4.50 -2.60v-5.20zM827.2 429.9l4.50 2.60v5.20l-4.50 2.60l-4.50 -2.60v-5.20zM1112.1 429.9l4.50 2.60v5.20l-4.50 2.60l-4.50 -2.60v-5.20zM1127.0 429.9l4.50 2.60v5.20l-4.50 2.60l-4.50 -2.60v-5.20zM1141.9 429.9l4.50 2.60v5.20l-4.50 2.60l-4.50 -2.60v-5.20zM1156.8 429.9l4.50 2.60v5.20l-4.50 2.60l-4.50 -2.60v-5.20zM1171.7 429.9l4.50 2.60v5.20l-4.50 2.60l-4.50 -2.60v-5.20zM1186.6 429.9l4.50 2.60v5.20l-4.50 2.60l-4.50 -2.60v-5.20zM1201.5 429.9l4.50 2.60v5.20l-4.50 2.60l-4.50 -2.60v-5.20zM1216.4 429.9l4.50 2.60v5.20l-4.50 2.60l-4.50 -2.60v-5.20zM1231.3 429.9l4.50 2.60v5.20l-4.50 2.60l-4.50 -2.60v-5.20zM1246.2 429.9l4.50 2.60v5.20l-4.50 2.60l-4.50 -2.60v-5.20zM1379.7 429.9l4.50 2.60v5.20l-4.50 2.60l-4.50 -2.60v-5.20zM1394.5 429.9l4.50 2.60v5.20l-4.50 2.60l-4.50 -2.60v-5.20zM1409.3 429.9l4.50 2.60v5.20l-4.50 2.60l-4.50 -2.60v-5.20zM1424.1 429.9l4.50 2.60v5.20l-4.50 2.60l-4.50 -2.60v-5.20zM1718.6 429.9l4.50 2.60v5.20l-4.50 2.60l-4.50 -2.60v-5.20zM1733.2 429.9l4.50 2.60v5.20l-4.50 2.60l-4.50 -2.60v-5.20zM1747.8 429.9l4.50 2.60v5.20l-4.50 2.60l-4.50 -2.60v-5.20zM1762.5 429.9l4.50 2.60v5.20l-4.50 2.60l-4.50 -2.60v-5.20zM1777.1 429.9l4.50 2.60v5.20l-4.50 2.60l-4.50 -2.60v-5.20zM1791.7 429.9l4.50 2.60v5.20l-4.50 2.60l-4.50 -2.60v-5.20zM1806.4 429.9l4.50 2.60v5.20l-4.50 2.60l-4.50 -2.60v-5.20zM729.2 442.8l4.50 2.60v5.20l-4.50 2.60l-4.50 -2.60v-5.20zM789.6 442.8l4.50 2.60v5.20l-4.50 2.60l-4.50 -2.60v-5.20zM804.6 442.8l4.50 2.60v5.20l-4.50 2.60l-4.50 -2.60v-5.20zM819.7 442.8l4.50 2.60v5.20l-4.50 2.60l-4.50 -2.60v-5.20zM1119.5 442.8l4.50 2.60v5.20l-4.50 2.60l-4.50 -2.60v-5.20zM1134.5 442.8l4.50 2.60v5.20l-4.50 2.60l-4.50 -2.60v-5.20zM1149.4 442.8l4.50 2.60v5.20l-4.50 2.60l-4.50 -2.60v-5.20zM1164.3 442.8l4.50 2.60v5.20l-4.50 2.60l-4.50 -2.60v-5.20zM1179.2 442.8l4.50 2.60v5.20l-4.50 2.60l-4.50 -2.60v-5.20zM1194.1 442.8l4.50 2.60v5.20l-4.50 2.60l-4.50 -2.60v-5.20zM1209.0 442.8l4.50 2.60v5.20l-4.50 2.60l-4.50 -2.60v-5.20zM1223.8 442.8l4.50 2.60v5.20l-4.50 2.60l-4.50 -2.60v-5.20zM1238.7 442.8l4.50 2.60v5.20l-4.50 2.60l-4.50 -2.60v-5.20zM1372.3 442.8l4.50 2.60v5.20l-4.50 2.60l-4.50 -2.60v-5.20zM1387.1 442.8l4.50 2.60v5.20l-4.50 2.60l-4.50 -2.60v-5.20zM1401.9 442.8l4.50 2.60v5.20l-4.50 2.60l-4.50 -2.60v-5.20zM1416.7 442.8l4.50 2.60v5.20l-4.50 2.60l-4.50 -2.60v-5.20zM1711.2 442.8l4.50 2.60v5.20l-4.50 2.60l-4.50 -2.60v-5.20zM1725.9 442.8l4.50 2.60v5.20l-4.50 2.60l-4.50 -2.60v-5.20zM1740.5 442.8l4.50 2.60v5.20l-4.50 2.60l-4.50 -2.60v-5.20zM1755.2 442.8l4.50 2.60v5.20l-4.50 2.60l-4.50 -2.60v-5.20zM1769.8 442.8l4.50 2.60v5.20l-4.50 2.60l-4.50 -2.60v-5.20zM1784.4 442.8l4.50 2.60v5.20l-4.50 2.60l-4.50 -2.60v-5.20zM1799.1 442.8l4.50 2.60v5.20l-4.50 2.60l-4.50 -2.60v-5.20zM782.0 455.7l4.50 2.60v5.20l-4.50 2.60l-4.50 -2.60v-5.20zM797.1 455.7l4.50 2.60v5.20l-4.50 2.60l-4.50 -2.60v-5.20zM812.2 455.7l4.50 2.60v5.20l-4.50 2.60l-4.50 -2.60v-5.20zM827.2 455.7l4.50 2.60v5.20l-4.50 2.60l-4.50 -2.60v-5.20zM842.3 455.7l4.50 2.60v5.20l-4.50 2.60l-4.50 -2.60v-5.20zM1171.7 455.7l4.50 2.60v5.20l-4.50 2.60l-4.50 -2.60v-5.20zM1186.6 455.7l4.50 2.60v5.20l-4.50 2.60l-4.50 -2.60v-5.20zM1201.5 455.7l4.50 2.60v5.20l-4.50 2.60l-4.50 -2.60v-5.20zM1216.4 455.7l4.50 2.60v5.20l-4.50 2.60l-4.50 -2.60v-5.20zM1231.3 455.7l4.50 2.60v5.20l-4.50 2.60l-4.50 -2.60v-5.20zM1246.2 455.7l4.50 2.60v5.20l-4.50 2.60l-4.50 -2.60v-5.20zM1261.0 455.7l4.50 2.60v5.20l-4.50 2.60l-4.50 -2.60v-5.20zM1275.9 455.7l4.50 2.60v5.20l-4.50 2.60l-4.50 -2.60v-5.20zM1290.7 455.7l4.50 2.60v5.20l-4.50 2.60l-4.50 -2.60v-5.20zM1305.6 455.7l4.50 2.60v5.20l-4.50 2.60l-4.50 -2.60v-5.20zM1379.7 455.7l4.50 2.60v5.20l-4.50 2.60l-4.50 -2.60v-5.20zM1394.5 455.7l4.50 2.60v5.20l-4.50 2.60l-4.50 -2.60v-5.20zM1409.3 455.7l4.50 2.60v5.20l-4.50 2.60l-4.50 -2.60v-5.20zM1424.1 455.7l4.50 2.60v5.20l-4.50 2.60l-4.50 -2.60v-5.20zM1372.3 417.0l4.50 2.60v5.20l-4.50 2.60l-4.50 -2.60v-5.20zM1387.1 417.0l4.50 2.60v5.20l-4.50 2.60l-4.50 -2.60v-5.20zM1401.9 417.0l4.50 2.60v5.20l-4.50 2.60l-4.50 -2.60v-5.20zM1416.7 417.0l4.50 2.60v5.20l-4.50 2.60l-4.50 -2.60v-5.20zM1431.5 417.0l4.50 2.60v5.20l-4.50 2.60l-4.50 -2.60v-5.20zM1446.3 417.0l4.50 2.60v5.20l-4.50 2.60l-4.50 -2.60v-5.20zM1461.1 417.0l4.50 2.60v5.20l-4.50 2.60l-4.50 -2.60v-5.20z"/>
</g>
<g fill="#ffffff">
<circle cx="668.8" cy="344.8" r="8.4"/>
<circle cx="683.9" cy="344.8" r="8.4"/>
<circle cx="699.0" cy="344.8" r="8.4"/>
<circle cx="714.1" cy="344.8" r="8.4"/>
<circle cx="729.2" cy="344.8" r="8.4"/>
<circle cx="744.3" cy="344.8" r="8.4"/>
<circle cx="759.4" cy="344.8" r="8.4"/>
<circle cx="774.5" cy="344.8" r="8.4"/>
<circle cx="789.6" cy="344.8" r="8.4"/>
<circle cx="804.6" cy="344.8" r="8.4"/>
<circle cx="819.7" cy="344.8" r="8.4"/>
<circle cx="834.8" cy="344.8" r="8.4"/>
<circle cx="849.8" cy="344.8" r="8.4"/>
<circle cx="864.9" cy="344.8" r="8.4"/>
<circle cx="879.9" cy="344.8" r="8.4"/>
<circle cx="894.9" cy="344.8" r="8.4"/>
<circle cx="909.9" cy="344.8" r="8.4"/>
<circle cx="924.9" cy="344.8" r="8.4"/>
<circle cx="940.0" cy="344.8" r="8.4"/>
<circle cx="955.0" cy="344.8" r="8.4"/>
<circle cx="970.0" cy="344.8" r="8.4"/>
<circle cx="984.9" cy="344.8" r="8.4"/>
<circle cx="999.9" cy="344.8" r="8.4"/>
<circle cx="1014.9" cy="344.8" r="8.4"/>
<circle cx="1029.9" cy="344.8" r="8.4"/>
<circle cx="1044.8" cy="344.8" r="8.4"/>
<circle cx="1059.8" cy="344.8" r="8.4"/>
<circle cx="1074.7" cy="344.8" r="8.4"/>
<circle cx="1089.7" cy="344.8" r="8.4"/>
<circle cx="1104.6" cy="344.8" r="8.4"/>
<circle cx="1119.5" cy="344.8" r="8.4"/>
<circle cx="1134.5" cy="344.8" r="8.4"/>
<circle cx="1149.4" cy="344.8" r="8.4"/>
<circle cx="1164.3" cy="344.8" r="8.4"/>
<circle cx="1179.2" cy="344.8" r="8.4"/>
<circle cx="1194.1" cy="344.8" r="8.4"/>
<circle cx="1209.0" cy="344.8" r="8.4"/>
<circle cx="1223.8" cy="344.8" r="8.4"/>
<circle cx="1238.7" cy="344.8" r="8.4"/>
<circle cx="1253.6" cy="344.8" r="8.4"/>
<circle cx="1268.5" cy="344.8" r="8.4"/>
<circle cx="1283.3" cy="344.8" r="8.4"/>
<circle cx="1298.2" cy="344.8" r="8.4"/>
<circle cx="1313.0" cy="344.8" r="8.4"/>
<circle cx="1327.8" cy="344.8" r="8.4"/>
<circle cx="1342.7" cy="344.8" r="8.4"/>
<circle cx="1357.5" cy="344.8" r="8.4"/>
<circle cx="1372.3" cy="344.8" r="8.4"/>
<circle cx="1387.1" cy="344.8" r="8.4"/>
<circle cx="1401.9" cy="344.8" r="8.4"/>
<circle cx="1416.7" cy="344.8" r="8.4"/>
<circle cx="1431.5" cy="344.8" r="8.4"/>
<circle cx="1446.3" cy="344.8" r="8.4"/>
<circle cx="1461.1" cy="344.8" r="8.4"/>
<circle cx="1475.8" cy="344.8" r="8.4"/>
<circle cx="1490.6" cy="344.8" r="8.4"/>
<circle cx="1505.3" cy="344.8" r="8.4"/>
<circle cx="1520.1" cy="344.8" r="8.4"/>
<circle cx="1534.8" cy="344.8" r="8.4"/>
<circle cx="1549.6" cy="344.8" r="8.4"/>
<circle cx="1564.3" cy="344.8" r="8.4"/>
<circle cx="1579.0" cy="344.8" r="8.4"/>
<circle cx="1593.7" cy="344.8" r="8.4"/>
<circle cx="1608.4" cy="344.8" r="8.4"/>
<circle cx="1623.1" cy="344.8" r="8.4"/>
<circle cx="1637.8" cy="344.8" r="8.4"/>
<circle cx="1652.5" cy="344.8" r="8.4"/>
<circle cx="1667.2" cy="344.8" r="8.4"/>
<circle cx="1681.9" cy="344.8" r="8.4"/>
<circle cx="1696.6" cy="344.8" r="8.4"/>
<circle cx="1711.2" cy="344.8" r="8.4"/>
<circle cx="1725.9" cy="344.8" r="8.4"/>
<circle cx="1740.5" cy="344.8" r="8.4"/>
<circle cx="1755.2" cy="344.8" r="8.4"/>
<circle cx="1769.8" cy="344.8" r="8.4"/>
<circle cx="1784.4" cy="344.8" r="8.4"/>
<circle cx="1799.1" cy="344.8" r="8.4"/>
<circle cx="1813.7" cy="344.8" r="8.4"/>
<circle cx="1828.3" cy="344.8" r="8.4"/>
<circle cx="1842.9" cy="344.8" r="8.4"/>
<circle cx="1857.5" cy="344.8" r="8.4"/>
<circle cx="1872.1" cy="344.8" r="8.4"/>
<circle cx="1886.7" cy="344.8" r="8.4"/>
</g>
<g fill="#060606">
<circle cx="668.8" cy="344.8" r="5.9"/>
<circle cx="683.9" cy="344.8" r="5.9"/>
<circle cx="699.0" cy="344.8" r="5.9"/>
<circle cx="714.1" cy="344.8" r="5.9"/>
<circle cx="729.2" cy="344.8" r="5.9"/>
<circle cx="744.3" cy="344.8" r="5.9"/>
<circle cx="759.4" cy="344.8" r="5.9"/>
<circle cx="774.5" cy="344.8" r="5.9"/>
<circle cx="789.6" cy="344.8" r="5.9"/>
<circle cx="804.6" cy="344.8" r="5.9"/>
<circle cx="819.7" cy="344.8" r="5.9"/>
<circle cx="834.8" cy="344.8" r="5.9"/>
<circle cx="849.8" cy="344.8" r="5.9"/>
<circle cx="864.9" cy="344.8" r="5.9"/>
<circle cx="879.9" cy="344.8" r="5.9"/>
<circle cx="894.9" cy="344.8" r="5.9"/>
<circle cx="909.9" cy="344.8" r="5.9"/>
<circle cx="924.9" cy="344.8" r="5.9"/>
<circle cx="940.0" cy="344.8" r="5.9"/>
<circle cx="955.0" cy="344.8" r="5.9"/>
<circle cx="970.0" cy="344.8" r="5.9"/>
<circle cx="984.9" cy="344.8" r="5.9"/>
<circle cx="999.9" cy="344.8" r="5.9"/>
<circle cx="1014.9" cy="344.8" r="5.9"/>
<circle cx="1029.9" cy="344.8" r="5.9"/>
<circle cx="1044.8" cy="344.8" r="5.9"/>
<circle cx="1059.8" cy="344.8" r="5.9"/>
<circle cx="1074.7" cy="344.8" r="5.9"/>
<circle cx="1089.7" cy="344.8" r="5.9"/>
<circle cx="1104.6" cy="344.8" r="5.9"/>
<circle cx="1119.5" cy="344.8" r="5.9"/>
<circle cx="1134.5" cy="344.8" r="5.9"/>
<circle cx="1149.4" cy="344.8" r="5.9"/>
<circle cx="1164.3" cy="344.8" r="5.9"/>
<circle cx="1179.2" cy="344.8" r="5.9"/>
<circle cx="1194.1" cy="344.8" r="5.9"/>
<circle cx="1209.0" cy="344.8" r="5.9"/>
<circle cx="1223.8" cy="344.8" r="5.9"/>
<circle cx="1238.7" cy="344.8" r="5.9"/>
<circle cx="1253.6" cy="344.8" r="5.9"/>
<circle cx="1268.5" cy="344.8" r="5.9"/>
<circle cx="1283.3" cy="344.8" r="5.9"/>
<circle cx="1298.2" cy="344.8" r="5.9"/>
<circle cx="1313.0" cy="344.8" r="5.9"/>
<circle cx="1327.8" cy="344.8" r="5.9"/>
<circle cx="1342.7" cy="344.8" r="5.9"/>
<circle cx="1357.5" cy="344.8" r="5.9"/>
<circle cx="1372.3" cy="344.8" r="5.9"/>
<circle cx="1387.1" cy="344.8" r="5.9"/>
<circle cx="1401.9" cy="344.8" r="5.9"/>
<circle cx="1416.7" cy="344.8" r="5.9"/>
<circle cx="1431.5" cy="344.8" r="5.9"/>
<circle cx="1446.3" cy="344.8" r="5.9"/>
<circle cx="1461.1" cy="344.8" r="5.9"/>
<circle cx="1475.8" cy="344.8" r="5.9"/>
<circle cx="1490.6" cy="344.8" r="5.9"/>
<circle cx="1505.3" cy="344.8" r="5.9"/>
<circle cx="1520.1" cy="344.8" r="5.9"/>
<circle cx="1534.8" cy="344.8" r="5.9"/>
<circle cx="1549.6" cy="344.8" r="5.9"/>
<circle cx="1564.3" cy="344.8" r="5.9"/>
<circle cx="1579.0" cy="344.8" r="5.9"/>
<circle cx="1593.7" cy="344.8" r="5.9"/>
<circle cx="1608.4" cy="344.8" r="5.9"/>
<circle cx="1623.1" cy="344.8" r="5.9"/>
<circle cx="1637.8" cy="344.8" r="5.9"/>
<circle cx="1652.5" cy="344.8" r="5.9"/>
<circle cx="1667.2" cy="344.8" r="5.9"/>
<circle cx="1681.9" cy="344.8" r="5.9"/>
<circle cx="1696.6" cy="344.8" r="5.9"/>
<circle cx="1711.2" cy="344.8" r="5.9"/>
<circle cx="1725.9" cy="344.8" r="5.9"/>
<circle cx="1740.5" cy="344.8" r="5.9"/>
<circle cx="1755.2" cy="344.8" r="5.9"/>
<circle cx="1769.8" cy="344.8" r="5.9"/>
<circle cx="1784.4" cy="344.8" r="5.9"/>
<circle cx="1799.1" cy="344.8" r="5.9"/>
<circle cx="1813.7" cy="344.8" r="5.9"/>
<circle cx="1828.3" cy="344.8" r="5.9"/>
<circle cx="1842.9" cy="344.8" r="5.9"/>
<circle cx="1857.5" cy="344.8" r="5.9"/>
<circle cx="1872.1" cy="344.8" r="5.9"/>
<circle cx="1886.7" cy="344.8" r="5.9"/>
</g>
<g fill="#060606" stroke="#060606" stroke-width="3.1" stroke-linejoin="round">
<path d="M676.4 352.5l4.50 2.60v5.20l-4.50 2.60l-4.50 -2.60v-5.20zM691.5 352.5l4.50 2.60v5.20l-4.50 2.60l-4.50 -2.60v-5.20zM706.6 352.5l4.50 2.60v5.20l-4.50 2.60l-4.50 -2.60v-5.20zM721.7 352.5l4.50 2.60v5.20l-4.50 2.60l-4.50 -2.60v-5.20zM736.8 352.5l4.50 2.60v5.20l-4.50 2.60l-4.50 -2.60v-5.20zM751.9 352.5l4.50 2.60v5.20l-4.50 2.60l-4.50 -2.60v-5.20zM767.0 352.5l4.50 2.60v5.20l-4.50 2.60l-4.50 -2.60v-5.20zM782.0 352.5l4.50 2.60v5.20l-4.50 2.60l-4.50 -2.60v-5.20zM797.1 352.5l4.50 2.60v5.20l-4.50 2.60l-4.50 -2.60v-5.20zM812.2 352.5l4.50 2.60v5.20l-4.50 2.60l-4.50 -2.60v-5.20zM827.2 352.5l4.50 2.60v5.20l-4.50 2.60l-4.50 -2.60v-5.20zM842.3 352.5l4.50 2.60v5.20l-4.50 2.60l-4.50 -2.60v-5.20zM1037.3 352.9l4.11 2.38v4.75l-4.11 2.38l-4.11 -2.38v-4.75zM1052.3 352.9l4.11 2.38v4.75l-4.11 2.38l-4.11 -2.38v-4.75zM1067.3 352.9l4.11 2.38v4.75l-4.11 2.38l-4.11 -2.38v-4.75zM1082.2 352.9l4.11 2.38v4.75l-4.11 2.38l-4.11 -2.38v-4.75zM1097.1 352.9l4.11 2.38v4.75l-4.11 2.38l-4.11 -2.38v-4.75zM1112.1 352.9l4.11 2.38v4.75l-4.11 2.38l-4.11 -2.38v-4.75zM1127.0 352.9l4.11 2.38v4.75l-4.11 2.38l-4.11 -2.38v-4.75zM1141.9 352.9l4.11 2.38v4.75l-4.11 2.38l-4.11 -2.38v-4.75zM1156.8 352.9l4.11 2.38v4.75l-4.11 2.38l-4.11 -2.38v-4.75zM1171.7 352.9l4.11 2.38v4.75l-4.11 2.38l-4.11 -2.38v-4.75zM1186.6 352.9l4.11 2.38v4.75l-4.11 2.38l-4.11 -2.38v-4.75zM1201.5 352.9l4.11 2.38v4.75l-4.11 2.38l-4.11 -2.38v-4.75zM1216.4 352.9l4.11 2.38v4.75l-4.11 2.38l-4.11 -2.38v-4.75zM1231.3 352.9l4.11 2.38v4.75l-4.11 2.38l-4.11 -2.38v-4.75zM1246.2 352.9l4.11 2.38v4.75l-4.11 2.38l-4.11 -2.38v-4.75zM1350.1 352.9l4.11 2.38v4.75l-4.11 2.38l-4.11 -2.38v-4.75zM1364.9 352.9l4.11 2.38v4.75l-4.11 2.38l-4.11 -2.38v-4.75zM1379.7 352.9l4.11 2.38v4.75l-4.11 2.38l-4.11 -2.38v-4.75zM1394.5 352.9l4.11 2.38v4.75l-4.11 2.38l-4.11 -2.38v-4.75zM1409.3 352.9l4.11 2.38v4.75l-4.11 2.38l-4.11 -2.38v-4.75zM1424.1 352.9l4.11 2.38v4.75l-4.11 2.38l-4.11 -2.38v-4.75zM1438.9 352.9l4.11 2.38v4.75l-4.11 2.38l-4.11 -2.38v-4.75zM1453.7 352.9l4.11 2.38v4.75l-4.11 2.38l-4.11 -2.38v-4.75zM1468.4 352.9l4.11 2.38v4.75l-4.11 2.38l-4.11 -2.38v-4.75zM1483.2 352.9l4.11 2.38v4.75l-4.11 2.38l-4.11 -2.38v-4.75zM1498.0 352.9l4.11 2.38v4.75l-4.11 2.38l-4.11 -2.38v-4.75zM1689.2 352.8l4.29 2.48v4.95l-4.29 2.48l-4.29 -2.48v-4.95zM1703.9 352.8l4.29 2.48v4.95l-4.29 2.48l-4.29 -2.48v-4.95zM1718.6 352.8l4.29 2.48v4.95l-4.29 2.48l-4.29 -2.48v-4.95zM1733.2 352.8l4.29 2.48v4.95l-4.29 2.48l-4.29 -2.48v-4.95zM1747.8 352.8l4.29 2.48v4.95l-4.29 2.48l-4.29 -2.48v-4.95zM1762.5 352.8l4.29 2.48v4.95l-4.29 2.48l-4.29 -2.48v-4.95zM1777.1 352.8l4.29 2.48v4.95l-4.29 2.48l-4.29 -2.48v-4.95zM1791.7 352.8l4.29 2.48v4.95l-4.29 2.48l-4.29 -2.48v-4.95zM1806.4 352.8l4.29 2.48v4.95l-4.29 2.48l-4.29 -2.48v-4.95zM1821.0 352.8l4.29 2.48v4.95l-4.29 2.48l-4.29 -2.48v-4.95zM1835.6 352.8l4.29 2.48v4.95l-4.29 2.48l-4.29 -2.48v-4.95zM1850.2 352.8l4.29 2.48v4.95l-4.29 2.48l-4.29 -2.48v-4.95zM1864.8 352.8l4.29 2.48v4.95l-4.29 2.48l-4.29 -2.48v-4.95zM1879.4 352.8l4.29 2.48v4.95l-4.29 2.48l-4.29 -2.48v-4.95zM668.8 365.4l4.50 2.60v5.20l-4.50 2.60l-4.50 -2.60v-5.20zM683.9 365.4l4.50 2.60v5.20l-4.50 2.60l-4.50 -2.60v-5.20zM699.0 365.4l4.50 2.60v5.20l-4.50 2.60l-4.50 -2.60v-5.20zM714.1 365.4l4.50 2.60v5.20l-4.50 2.60l-4.50 -2.60v-5.20zM729.2 365.4l4.50 2.60v5.20l-4.50 2.60l-4.50 -2.60v-5.20zM744.3 365.4l4.50 2.60v5.20l-4.50 2.60l-4.50 -2.60v-5.20zM759.4 365.4l4.50 2.60v5.20l-4.50 2.60l-4.50 -2.60v-5.20zM774.5 365.4l4.50 2.60v5.20l-4.50 2.60l-4.50 -2.60v-5.20zM789.6 365.4l4.50 2.60v5.20l-4.50 2.60l-4.50 -2.60v-5.20zM804.6 365.4l4.50 2.60v5.20l-4.50 2.60l-4.50 -2.60v-5.20zM819.7 365.4l4.50 2.60v5.20l-4.50 2.60l-4.50 -2.60v-5.20zM834.8 365.4l4.50 2.60v5.20l-4.50 2.60l-4.50 -2.60v-5.20zM849.8 365.4l4.50 2.60v5.20l-4.50 2.60l-4.50 -2.60v-5.20zM1029.9 365.9l4.11 2.38v4.75l-4.11 2.38l-4.11 -2.38v-4.75zM1044.8 365.9l4.11 2.38v4.75l-4.11 2.38l-4.11 -2.38v-4.75zM1059.8 365.9l4.11 2.38v4.75l-4.11 2.38l-4.11 -2.38v-4.75zM1074.7 365.9l4.11 2.38v4.75l-4.11 2.38l-4.11 -2.38v-4.75zM1089.7 365.9l4.11 2.38v4.75l-4.11 2.38l-4.11 -2.38v-4.75zM1104.6 365.9l4.11 2.38v4.75l-4.11 2.38l-4.11 -2.38v-4.75zM1119.5 365.9l4.11 2.38v4.75l-4.11 2.38l-4.11 -2.38v-4.75zM1134.5 365.9l4.11 2.38v4.75l-4.11 2.38l-4.11 -2.38v-4.75zM1149.4 365.9l4.11 2.38v4.75l-4.11 2.38l-4.11 -2.38v-4.75zM1164.3 365.9l4.11 2.38v4.75l-4.11 2.38l-4.11 -2.38v-4.75zM1179.2 365.9l4.11 2.38v4.75l-4.11 2.38l-4.11 -2.38v-4.75zM1194.1 365.9l4.11 2.38v4.75l-4.11 2.38l-4.11 -2.38v-4.75zM1209.0 365.9l4.11 2.38v4.75l-4.11 2.38l-4.11 -2.38v-4.75zM1223.8 365.9l4.11 2.38v4.75l-4.11 2.38l-4.11 -2.38v-4.75zM1238.7 365.9l4.11 2.38v4.75l-4.11 2.38l-4.11 -2.38v-4.75zM1342.7 365.9l4.11 2.38v4.75l-4.11 2.38l-4.11 -2.38v-4.75zM1357.5 365.9l4.11 2.38v4.75l-4.11 2.38l-4.11 -2.38v-4.75zM1372.3 365.9l4.11 2.38v4.75l-4.11 2.38l-4.11 -2.38v-4.75zM1387.1 365.9l4.11 2.38v4.75l-4.11 2.38l-4.11 -2.38v-4.75zM1401.9 365.9l4.11 2.38v4.75l-4.11 2.38l-4.11 -2.38v-4.75zM1416.7 365.9l4.11 2.38v4.75l-4.11 2.38l-4.11 -2.38v-4.75zM1431.5 365.9l4.11 2.38v4.75l-4.11 2.38l-4.11 -2.38v-4.75zM1446.3 365.9l4.11 2.38v4.75l-4.11 2.38l-4.11 -2.38v-4.75zM1461.1 365.9l4.11 2.38v4.75l-4.11 2.38l-4.11 -2.38v-4.75zM1475.8 365.9l4.11 2.38v4.75l-4.11 2.38l-4.11 -2.38v-4.75zM1490.6 365.9l4.11 2.38v4.75l-4.11 2.38l-4.11 -2.38v-4.75zM1505.3 365.7l4.29 2.48v4.95l-4.29 2.48l-4.29 -2.48v-4.95zM1681.9 365.7l4.29 2.48v4.95l-4.29 2.48l-4.29 -2.48v-4.95zM1696.6 365.7l4.29 2.48v4.95l-4.29 2.48l-4.29 -2.48v-4.95zM1711.2 365.7l4.29 2.48v4.95l-4.29 2.48l-4.29 -2.48v-4.95zM1725.9 365.7l4.29 2.48v4.95l-4.29 2.48l-4.29 -2.48v-4.95zM1740.5 365.7l4.29 2.48v4.95l-4.29 2.48l-4.29 -2.48v-4.95zM1755.2 365.7l4.29 2.48v4.95l-4.29 2.48l-4.29 -2.48v-4.95zM1769.8 365.7l4.29 2.48v4.95l-4.29 2.48l-4.29 -2.48v-4.95zM1784.4 365.7l4.29 2.48v4.95l-4.29 2.48l-4.29 -2.48v-4.95zM1799.1 365.7l4.29 2.48v4.95l-4.29 2.48l-4.29 -2.48v-4.95zM1813.7 365.7l4.29 2.48v4.95l-4.29 2.48l-4.29 -2.48v-4.95zM1828.3 365.7l4.29 2.48v4.95l-4.29 2.48l-4.29 -2.48v-4.95zM1842.9 365.7l4.29 2.48v4.95l-4.29 2.48l-4.29 -2.48v-4.95zM1857.5 365.7l4.29 2.48v4.95l-4.29 2.48l-4.29 -2.48v-4.95zM1872.1 365.7l4.29 2.48v4.95l-4.29 2.48l-4.29 -2.48v-4.95zM1886.7 365.7l4.29 2.48v4.95l-4.29 2.48l-4.29 -2.48v-4.95zM676.4 378.3l4.50 2.60v5.20l-4.50 2.60l-4.50 -2.60v-5.20zM691.5 378.3l4.50 2.60v5.20l-4.50 2.60l-4.50 -2.60v-5.20zM706.6 378.3l4.50 2.60v5.20l-4.50 2.60l-4.50 -2.60v-5.20zM721.7 378.3l4.50 2.60v5.20l-4.50 2.60l-4.50 -2.60v-5.20zM736.8 378.3l4.50 2.60v5.20l-4.50 2.60l-4.50 -2.60v-5.20zM751.9 378.3l4.50 2.60v5.20l-4.50 2.60l-4.50 -2.60v-5.20zM767.0 378.3l4.50 2.60v5.20l-4.50 2.60l-4.50 -2.60v-5.20zM782.0 378.3l4.50 2.60v5.20l-4.50 2.60l-4.50 -2.60v-5.20zM797.1 378.3l4.50 2.60v5.20l-4.50 2.60l-4.50 -2.60v-5.20zM812.2 378.3l4.50 2.60v5.20l-4.50 2.60l-4.50 -2.60v-5.20zM827.2 378.3l4.50 2.60v5.20l-4.50 2.60l-4.50 -2.60v-5.20zM842.3 378.3l4.50 2.60v5.20l-4.50 2.60l-4.50 -2.60v-5.20zM1037.3 378.8l4.11 2.38v4.75l-4.11 2.38l-4.11 -2.38v-4.75zM1052.3 378.8l4.11 2.38v4.75l-4.11 2.38l-4.11 -2.38v-4.75zM1067.3 378.8l4.11 2.38v4.75l-4.11 2.38l-4.11 -2.38v-4.75zM1082.2 378.8l4.11 2.38v4.75l-4.11 2.38l-4.11 -2.38v-4.75zM1097.1 378.8l4.11 2.38v4.75l-4.11 2.38l-4.11 -2.38v-4.75zM1112.1 378.8l4.11 2.38v4.75l-4.11 2.38l-4.11 -2.38v-4.75zM1127.0 378.8l4.11 2.38v4.75l-4.11 2.38l-4.11 -2.38v-4.75zM1141.9 378.8l4.11 2.38v4.75l-4.11 2.38l-4.11 -2.38v-4.75zM1156.8 378.8l4.11 2.38v4.75l-4.11 2.38l-4.11 -2.38v-4.75zM1171.7 378.8l4.11 2.38v4.75l-4.11 2.38l-4.11 -2.38v-4.75zM1186.6 378.8l4.11 2.38v4.75l-4.11 2.38l-4.11 -2.38v-4.75zM1201.5 378.8l4.11 2.38v4.75l-4.11 2.38l-4.11 -2.38v-4.75zM1216.4 378.8l4.11 2.38v4.75l-4.11 2.38l-4.11 -2.38v-4.75zM1231.3 378.8l4.11 2.38v4.75l-4.11 2.38l-4.11 -2.38v-4.75zM1246.2 378.8l4.11 2.38v4.75l-4.11 2.38l-4.11 -2.38v-4.75zM1350.1 378.8l4.11 2.38v4.75l-4.11 2.38l-4.11 -2.38v-4.75zM1364.9 378.8l4.11 2.38v4.75l-4.11 2.38l-4.11 -2.38v-4.75zM1379.7 378.8l4.11 2.38v4.75l-4.11 2.38l-4.11 -2.38v-4.75zM1394.5 378.8l4.11 2.38v4.75l-4.11 2.38l-4.11 -2.38v-4.75zM1409.3 378.8l4.11 2.38v4.75l-4.11 2.38l-4.11 -2.38v-4.75zM1424.1 378.8l4.11 2.38v4.75l-4.11 2.38l-4.11 -2.38v-4.75zM1438.9 378.8l4.11 2.38v4.75l-4.11 2.38l-4.11 -2.38v-4.75zM1453.7 378.8l4.11 2.38v4.75l-4.11 2.38l-4.11 -2.38v-4.75zM1468.4 378.8l4.11 2.38v4.75l-4.11 2.38l-4.11 -2.38v-4.75zM1483.2 378.8l4.11 2.38v4.75l-4.11 2.38l-4.11 -2.38v-4.75zM1498.0 378.8l4.11 2.38v4.75l-4.11 2.38l-4.11 -2.38v-4.75zM1689.2 378.6l4.29 2.48v4.95l-4.29 2.48l-4.29 -2.48v-4.95zM1703.9 378.6l4.29 2.48v4.95l-4.29 2.48l-4.29 -2.48v-4.95zM1718.6 378.6l4.29 2.48v4.95l-4.29 2.48l-4.29 -2.48v-4.95zM1733.2 378.6l4.29 2.48v4.95l-4.29 2.48l-4.29 -2.48v-4.95zM1747.8 378.6l4.29 2.48v4.95l-4.29 2.48l-4.29 -2.48v-4.95zM1762.5 378.6l4.29 2.48v4.95l-4.29 2.48l-4.29 -2.48v-4.95zM1777.1 378.6l4.29 2.48v4.95l-4.29 2.48l-4.29 -2.48v-4.95zM1791.7 378.6l4.29 2.48v4.95l-4.29 2.48l-4.29 -2.48v-4.95zM1806.4 378.6l4.29 2.48v4.95l-4.29 2.48l-4.29 -2.48v-4.95zM1821.0 378.6l4.29 2.48v4.95l-4.29 2.48l-4.29 -2.48v-4.95zM1835.6 378.6l4.29 2.48v4.95l-4.29 2.48l-4.29 -2.48v-4.95zM1850.2 378.6l4.29 2.48v4.95l-4.29 2.48l-4.29 -2.48v-4.95zM1864.8 378.6l4.29 2.48v4.95l-4.29 2.48l-4.29 -2.48v-4.95zM1879.4 378.6l4.29 2.48v4.95l-4.29 2.48l-4.29 -2.48v-4.95zM668.8 391.2l4.50 2.60v5.20l-4.50 2.60l-4.50 -2.60v-5.20zM683.9 391.2l4.50 2.60v5.20l-4.50 2.60l-4.50 -2.60v-5.20zM699.0 391.2l4.50 2.60v5.20l-4.50 2.60l-4.50 -2.60v-5.20zM714.1 391.2l4.50 2.60v5.20l-4.50 2.60l-4.50 -2.60v-5.20zM729.2 391.2l4.50 2.60v5.20l-4.50 2.60l-4.50 -2.60v-5.20zM744.3 391.2l4.50 2.60v5.20l-4.50 2.60l-4.50 -2.60v-5.20zM759.4 391.2l4.50 2.60v5.20l-4.50 2.60l-4.50 -2.60v-5.20zM774.5 391.2l4.50 2.60v5.20l-4.50 2.60l-4.50 -2.60v-5.20zM789.6 391.2l4.50 2.60v5.20l-4.50 2.60l-4.50 -2.60v-5.20zM804.6 391.2l4.50 2.60v5.20l-4.50 2.60l-4.50 -2.60v-5.20zM819.7 391.2l4.50 2.60v5.20l-4.50 2.60l-4.50 -2.60v-5.20zM834.8 391.2l4.50 2.60v5.20l-4.50 2.60l-4.50 -2.60v-5.20zM849.8 391.2l4.50 2.60v5.20l-4.50 2.60l-4.50 -2.60v-5.20zM1029.9 391.7l4.11 2.38v4.75l-4.11 2.38l-4.11 -2.38v-4.75zM1044.8 391.7l4.11 2.38v4.75l-4.11 2.38l-4.11 -2.38v-4.75zM1059.8 391.7l4.11 2.38v4.75l-4.11 2.38l-4.11 -2.38v-4.75zM1074.7 391.7l4.11 2.38v4.75l-4.11 2.38l-4.11 -2.38v-4.75zM1089.7 391.7l4.11 2.38v4.75l-4.11 2.38l-4.11 -2.38v-4.75zM1104.6 391.7l4.11 2.38v4.75l-4.11 2.38l-4.11 -2.38v-4.75zM1119.5 391.7l4.11 2.38v4.75l-4.11 2.38l-4.11 -2.38v-4.75zM1134.5 391.7l4.11 2.38v4.75l-4.11 2.38l-4.11 -2.38v-4.75zM1149.4 391.7l4.11 2.38v4.75l-4.11 2.38l-4.11 -2.38v-4.75zM1164.3 391.7l4.11 2.38v4.75l-4.11 2.38l-4.11 -2.38v-4.75zM1179.2 391.7l4.11 2.38v4.75l-4.11 2.38l-4.11 -2.38v-4.75zM1194.1 391.7l4.11 2.38v4.75l-4.11 2.38l-4.11 -2.38v-4.75zM1209.0 391.7l4.11 2.38v4.75l-4.11 2.38l-4.11 -2.38v-4.75zM1223.8 391.7l4.11 2.38v4.75l-4.11 2.38l-4.11 -2.38v-4.75zM1238.7 391.7l4.11 2.38v4.75l-4.11 2.38l-4.11 -2.38v-4.75zM1372.3 391.7l4.11 2.38v4.75l-4.11 2.38l-4.11 -2.38v-4.75zM1387.1 391.7l4.11 2.38v4.75l-4.11 2.38l-4.11 -2.38v-4.75zM1401.9 391.7l4.11 2.38v4.75l-4.11 2.38l-4.11 -2.38v-4.75zM1416.7 391.7l4.11 2.38v4.75l-4.11 2.38l-4.11 -2.38v-4.75zM1431.5 391.7l4.11 2.38v4.75l-4.11 2.38l-4.11 -2.38v-4.75zM1446.3 391.7l4.11 2.38v4.75l-4.11 2.38l-4.11 -2.38v-4.75zM1461.1 391.7l4.11 2.38v4.75l-4.11 2.38l-4.11 -2.38v-4.75zM1475.8 391.7l4.11 2.38v4.75l-4.11 2.38l-4.11 -2.38v-4.75zM1490.6 391.7l4.11 2.38v4.75l-4.11 2.38l-4.11 -2.38v-4.75zM1505.3 391.5l4.29 2.48v4.95l-4.29 2.48l-4.29 -2.48v-4.95zM1681.9 391.5l4.29 2.48v4.95l-4.29 2.48l-4.29 -2.48v-4.95zM1696.6 391.5l4.29 2.48v4.95l-4.29 2.48l-4.29 -2.48v-4.95zM1711.2 391.5l4.29 2.48v4.95l-4.29 2.48l-4.29 -2.48v-4.95zM1725.9 391.5l4.29 2.48v4.95l-4.29 2.48l-4.29 -2.48v-4.95zM1740.5 391.5l4.29 2.48v4.95l-4.29 2.48l-4.29 -2.48v-4.95zM1755.2 391.5l4.29 2.48v4.95l-4.29 2.48l-4.29 -2.48v-4.95zM1769.8 391.5l4.29 2.48v4.95l-4.29 2.48l-4.29 -2.48v-4.95zM1784.4 391.5l4.29 2.48v4.95l-4.29 2.48l-4.29 -2.48v-4.95zM1799.1 391.5l4.29 2.48v4.95l-4.29 2.48l-4.29 -2.48v-4.95zM1813.7 391.5l4.29 2.48v4.95l-4.29 2.48l-4.29 -2.48v-4.95zM1828.3 391.5l4.29 2.48v4.95l-4.29 2.48l-4.29 -2.48v-4.95zM1842.9 391.5l4.29 2.48v4.95l-4.29 2.48l-4.29 -2.48v-4.95zM1857.5 391.5l4.29 2.48v4.95l-4.29 2.48l-4.29 -2.48v-4.95zM1872.1 391.5l4.29 2.48v4.95l-4.29 2.48l-4.29 -2.48v-4.95zM1886.7 391.5l4.29 2.48v4.95l-4.29 2.48l-4.29 -2.48v-4.95zM721.7 404.1l4.50 2.60v5.20l-4.50 2.60l-4.50 -2.60v-5.20zM736.8 404.1l4.50 2.60v5.20l-4.50 2.60l-4.50 -2.60v-5.20zM751.9 404.1l4.50 2.60v5.20l-4.50 2.60l-4.50 -2.60v-5.20zM767.0 404.1l4.50 2.60v5.20l-4.50 2.60l-4.50 -2.60v-5.20zM782.0 404.1l4.50 2.60v5.20l-4.50 2.60l-4.50 -2.60v-5.20zM797.1 404.1l4.50 2.60v5.20l-4.50 2.60l-4.50 -2.60v-5.20zM812.2 404.1l4.50 2.60v5.20l-4.50 2.60l-4.50 -2.60v-5.20zM827.2 404.1l4.50 2.60v5.20l-4.50 2.60l-4.50 -2.60v-5.20zM842.3 404.1l4.50 2.60v5.20l-4.50 2.60l-4.50 -2.60v-5.20zM1037.3 404.6l4.11 2.38v4.75l-4.11 2.38l-4.11 -2.38v-4.75zM1052.3 404.6l4.11 2.38v4.75l-4.11 2.38l-4.11 -2.38v-4.75zM1067.3 404.6l4.11 2.38v4.75l-4.11 2.38l-4.11 -2.38v-4.75zM1082.2 404.6l4.11 2.38v4.75l-4.11 2.38l-4.11 -2.38v-4.75zM1097.1 404.6l4.11 2.38v4.75l-4.11 2.38l-4.11 -2.38v-4.75zM1112.1 404.6l4.11 2.38v4.75l-4.11 2.38l-4.11 -2.38v-4.75zM1127.0 404.6l4.11 2.38v4.75l-4.11 2.38l-4.11 -2.38v-4.75zM1141.9 404.6l4.11 2.38v4.75l-4.11 2.38l-4.11 -2.38v-4.75zM1156.8 404.6l4.11 2.38v4.75l-4.11 2.38l-4.11 -2.38v-4.75zM1171.7 404.6l4.11 2.38v4.75l-4.11 2.38l-4.11 -2.38v-4.75zM1186.6 404.6l4.11 2.38v4.75l-4.11 2.38l-4.11 -2.38v-4.75zM1201.5 404.6l4.11 2.38v4.75l-4.11 2.38l-4.11 -2.38v-4.75zM1216.4 404.6l4.11 2.38v4.75l-4.11 2.38l-4.11 -2.38v-4.75zM1231.3 404.6l4.11 2.38v4.75l-4.11 2.38l-4.11 -2.38v-4.75zM1246.2 404.6l4.11 2.38v4.75l-4.11 2.38l-4.11 -2.38v-4.75zM1379.7 404.6l4.11 2.38v4.75l-4.11 2.38l-4.11 -2.38v-4.75zM1394.5 404.6l4.11 2.38v4.75l-4.11 2.38l-4.11 -2.38v-4.75zM1409.3 404.6l4.11 2.38v4.75l-4.11 2.38l-4.11 -2.38v-4.75zM1424.1 404.6l4.11 2.38v4.75l-4.11 2.38l-4.11 -2.38v-4.75zM1438.9 404.6l4.11 2.38v4.75l-4.11 2.38l-4.11 -2.38v-4.75zM1453.7 404.6l4.11 2.38v4.75l-4.11 2.38l-4.11 -2.38v-4.75zM1468.4 404.6l4.11 2.38v4.75l-4.11 2.38l-4.11 -2.38v-4.75zM1483.2 404.6l4.11 2.38v4.75l-4.11 2.38l-4.11 -2.38v-4.75zM1498.0 404.6l4.11 2.38v4.75l-4.11 2.38l-4.11 -2.38v-4.75zM1689.2 404.4l4.29 2.48v4.95l-4.29 2.48l-4.29 -2.48v-4.95zM1703.9 404.4l4.29 2.48v4.95l-4.29 2.48l-4.29 -2.48v-4.95zM1718.6 404.4l4.29 2.48v4.95l-4.29 2.48l-4.29 -2.48v-4.95zM1733.2 404.4l4.29 2.48v4.95l-4.29 2.48l-4.29 -2.48v-4.95zM1747.8 404.4l4.29 2.48v4.95l-4.29 2.48l-4.29 -2.48v-4.95zM1762.5 404.4l4.29 2.48v4.95l-4.29 2.48l-4.29 -2.48v-4.95zM1777.1 404.4l4.29 2.48v4.95l-4.29 2.48l-4.29 -2.48v-4.95zM1791.7 404.4l4.29 2.48v4.95l-4.29 2.48l-4.29 -2.48v-4.95zM1806.4 404.4l4.29 2.48v4.95l-4.29 2.48l-4.29 -2.48v-4.95zM714.1 417.0l4.50 2.60v5.20l-4.50 2.60l-4.50 -2.60v-5.20zM729.2 417.0l4.50 2.60v5.20l-4.50 2.60l-4.50 -2.60v-5.20zM744.3 417.0l4.50 2.60v5.20l-4.50 2.60l-4.50 -2.60v-5.20zM759.4 417.0l4.50 2.60v5.20l-4.50 2.60l-4.50 -2.60v-5.20zM774.5 417.0l4.50 2.60v5.20l-4.50 2.60l-4.50 -2.60v-5.20zM789.6 417.0l4.50 2.60v5.20l-4.50 2.60l-4.50 -2.60v-5.20zM804.6 417.0l4.50 2.60v5.20l-4.50 2.60l-4.50 -2.60v-5.20zM819.7 417.0l4.50 2.60v5.20l-4.50 2.60l-4.50 -2.60v-5.20zM1074.7 417.5l4.11 2.38v4.75l-4.11 2.38l-4.11 -2.38v-4.75zM1089.7 417.5l4.11 2.38v4.75l-4.11 2.38l-4.11 -2.38v-4.75zM1104.6 417.5l4.11 2.38v4.75l-4.11 2.38l-4.11 -2.38v-4.75zM1119.5 417.5l4.11 2.38v4.75l-4.11 2.38l-4.11 -2.38v-4.75zM1134.5 417.5l4.11 2.38v4.75l-4.11 2.38l-4.11 -2.38v-4.75zM1149.4 417.5l4.11 2.38v4.75l-4.11 2.38l-4.11 -2.38v-4.75zM1164.3 417.5l4.11 2.38v4.75l-4.11 2.38l-4.11 -2.38v-4.75zM1179.2 417.5l4.11 2.38v4.75l-4.11 2.38l-4.11 -2.38v-4.75zM1194.1 417.5l4.11 2.38v4.75l-4.11 2.38l-4.11 -2.38v-4.75zM1209.0 417.5l4.11 2.38v4.75l-4.11 2.38l-4.11 -2.38v-4.75zM1223.8 417.5l4.11 2.38v4.75l-4.11 2.38l-4.11 -2.38v-4.75zM1238.7 417.5l4.11 2.38v4.75l-4.11 2.38l-4.11 -2.38v-4.75zM1711.2 417.3l4.29 2.48v4.95l-4.29 2.48l-4.29 -2.48v-4.95zM1725.9 417.3l4.29 2.48v4.95l-4.29 2.48l-4.29 -2.48v-4.95zM1740.5 417.3l4.29 2.48v4.95l-4.29 2.48l-4.29 -2.48v-4.95zM1755.2 417.3l4.29 2.48v4.95l-4.29 2.48l-4.29 -2.48v-4.95zM1769.8 417.3l4.29 2.48v4.95l-4.29 2.48l-4.29 -2.48v-4.95zM1784.4 417.3l4.29 2.48v4.95l-4.29 2.48l-4.29 -2.48v-4.95zM1799.1 417.3l4.29 2.48v4.95l-4.29 2.48l-4.29 -2.48v-4.95zM1813.7 417.3l4.29 2.48v4.95l-4.29 2.48l-4.29 -2.48v-4.95zM721.7 429.9l4.50 2.60v5.20l-4.50 2.60l-4.50 -2.60v-5.20zM736.8 429.9l4.50 2.60v5.20l-4.50 2.60l-4.50 -2.60v-5.20zM782.0 429.9l4.50 2.60v5.20l-4.50 2.60l-4.50 -2.60v-5.20zM797.1 429.9l4.50 2.60v5.20l-4.50 2.60l-4.50 -2.60v-5.20zM812.2 429.9l4.50 2.60v5.20l-4.50 2.60l-4.50 -2.60v-5.20zM827.2 429.9l4.50 2.60v5.20l-4.50 2.60l-4.50 -2.60v-5.20zM1112.1 430.4l4.11 2.38v4.75l-4.11 2.38l-4.11 -2.38v-4.75zM1127.0 430.4l4.11 2.38v4.75l-4.11 2.38l-4.11 -2.38v-4.75zM1141.9 430.4l4.11 2.38v4.75l-4.11 2.38l-4.11 -2.38v-4.75zM1156.8 430.4l4.11 2.38v4.75l-4.11 2.38l-4.11 -2.38v-4.75zM1171.7 430.4l4.11 2.38v4.75l-4.11 2.38l-4.11 -2.38v-4.75zM1186.6 430.4l4.11 2.38v4.75l-4.11 2.38l-4.11 -2.38v-4.75zM1201.5 430.4l4.11 2.38v4.75l-4.11 2.38l-4.11 -2.38v-4.75zM1216.4 430.4l4.11 2.38v4.75l-4.11 2.38l-4.11 -2.38v-4.75zM1231.3 430.4l4.11 2.38v4.75l-4.11 2.38l-4.11 -2.38v-4.75zM1246.2 430.4l4.11 2.38v4.75l-4.11 2.38l-4.11 -2.38v-4.75zM1379.7 430.4l4.11 2.38v4.75l-4.11 2.38l-4.11 -2.38v-4.75zM1394.5 430.4l4.11 2.38v4.75l-4.11 2.38l-4.11 -2.38v-4.75zM1409.3 430.4l4.11 2.38v4.75l-4.11 2.38l-4.11 -2.38v-4.75zM1424.1 430.4l4.11 2.38v4.75l-4.11 2.38l-4.11 -2.38v-4.75zM1718.6 430.2l4.29 2.48v4.95l-4.29 2.48l-4.29 -2.48v-4.95zM1733.2 430.2l4.29 2.48v4.95l-4.29 2.48l-4.29 -2.48v-4.95zM1747.8 430.2l4.29 2.48v4.95l-4.29 2.48l-4.29 -2.48v-4.95zM1762.5 430.2l4.29 2.48v4.95l-4.29 2.48l-4.29 -2.48v-4.95zM1777.1 430.2l4.29 2.48v4.95l-4.29 2.48l-4.29 -2.48v-4.95zM1791.7 430.2l4.29 2.48v4.95l-4.29 2.48l-4.29 -2.48v-4.95zM1806.4 430.2l4.29 2.48v4.95l-4.29 2.48l-4.29 -2.48v-4.95zM729.2 442.8l4.50 2.60v5.20l-4.50 2.60l-4.50 -2.60v-5.20zM789.6 442.8l4.50 2.60v5.20l-4.50 2.60l-4.50 -2.60v-5.20zM804.6 442.8l4.50 2.60v5.20l-4.50 2.60l-4.50 -2.60v-5.20zM819.7 442.8l4.50 2.60v5.20l-4.50 2.60l-4.50 -2.60v-5.20zM1119.5 443.2l4.11 2.38v4.75l-4.11 2.38l-4.11 -2.38v-4.75zM1134.5 443.2l4.11 2.38v4.75l-4.11 2.38l-4.11 -2.38v-4.75zM1149.4 443.2l4.11 2.38v4.75l-4.11 2.38l-4.11 -2.38v-4.75zM1164.3 443.2l4.11 2.38v4.75l-4.11 2.38l-4.11 -2.38v-4.75zM1179.2 443.2l4.11 2.38v4.75l-4.11 2.38l-4.11 -2.38v-4.75zM1194.1 443.2l4.11 2.38v4.75l-4.11 2.38l-4.11 -2.38v-4.75zM1209.0 443.2l4.11 2.38v4.75l-4.11 2.38l-4.11 -2.38v-4.75zM1223.8 443.2l4.11 2.38v4.75l-4.11 2.38l-4.11 -2.38v-4.75zM1238.7 443.2l4.11 2.38v4.75l-4.11 2.38l-4.11 -2.38v-4.75zM1372.3 443.2l4.11 2.38v4.75l-4.11 2.38l-4.11 -2.38v-4.75zM1387.1 443.2l4.11 2.38v4.75l-4.11 2.38l-4.11 -2.38v-4.75zM1401.9 443.2l4.11 2.38v4.75l-4.11 2.38l-4.11 -2.38v-4.75zM1416.7 443.2l4.11 2.38v4.75l-4.11 2.38l-4.11 -2.38v-4.75zM1711.2 443.1l4.29 2.48v4.95l-4.29 2.48l-4.29 -2.48v-4.95zM1725.9 443.1l4.29 2.48v4.95l-4.29 2.48l-4.29 -2.48v-4.95zM1740.5 443.1l4.29 2.48v4.95l-4.29 2.48l-4.29 -2.48v-4.95zM1755.2 443.1l4.29 2.48v4.95l-4.29 2.48l-4.29 -2.48v-4.95zM1769.8 443.1l4.29 2.48v4.95l-4.29 2.48l-4.29 -2.48v-4.95zM1784.4 443.1l4.29 2.48v4.95l-4.29 2.48l-4.29 -2.48v-4.95zM1799.1 443.1l4.29 2.48v4.95l-4.29 2.48l-4.29 -2.48v-4.95zM782.0 455.7l4.50 2.60v5.20l-4.50 2.60l-4.50 -2.60v-5.20zM797.1 455.7l4.50 2.60v5.20l-4.50 2.60l-4.50 -2.60v-5.20zM812.2 455.7l4.50 2.60v5.20l-4.50 2.60l-4.50 -2.60v-5.20zM827.2 455.7l4.50 2.60v5.20l-4.50 2.60l-4.50 -2.60v-5.20zM842.3 455.7l4.50 2.60v5.20l-4.50 2.60l-4.50 -2.60v-5.20zM1171.7 456.2l4.11 2.38v4.75l-4.11 2.38l-4.11 -2.38v-4.75zM1186.6 456.2l4.11 2.38v4.75l-4.11 2.38l-4.11 -2.38v-4.75zM1201.5 456.2l4.11 2.38v4.75l-4.11 2.38l-4.11 -2.38v-4.75zM1216.4 456.2l4.11 2.38v4.75l-4.11 2.38l-4.11 -2.38v-4.75zM1231.3 456.2l4.11 2.38v4.75l-4.11 2.38l-4.11 -2.38v-4.75zM1246.2 456.2l4.11 2.38v4.75l-4.11 2.38l-4.11 -2.38v-4.75zM1261.0 456.2l4.11 2.38v4.75l-4.11 2.38l-4.11 -2.38v-4.75zM1275.9 456.2l4.11 2.38v4.75l-4.11 2.38l-4.11 -2.38v-4.75zM1290.7 456.2l4.11 2.38v4.75l-4.11 2.38l-4.11 -2.38v-4.75zM1305.6 456.2l4.11 2.38v4.75l-4.11 2.38l-4.11 -2.38v-4.75zM1379.7 456.2l4.11 2.38v4.75l-4.11 2.38l-4.11 -2.38v-4.75zM1394.5 456.2l4.11 2.38v4.75l-4.11 2.38l-4.11 -2.38v-4.75zM1409.3 456.2l4.11 2.38v4.75l-4.11 2.38l-4.11 -2.38v-4.75zM1424.1 456.2l4.11 2.38v4.75l-4.11 2.38l-4.11 -2.38v-4.75z"/>
</g>
<g fill="#8a7f6c" stroke="#8a7f6c" stroke-width="3.1" stroke-linejoin="round">
<path d="M1372.3 417.5l4.11 2.38v4.75l-4.11 2.38l-4.11 -2.38v-4.75zM1387.1 417.5l4.11 2.38v4.75l-4.11 2.38l-4.11 -2.38v-4.75zM1401.9 417.5l4.11 2.38v4.75l-4.11 2.38l-4.11 -2.38v-4.75zM1416.7 417.5l4.11 2.38v4.75l-4.11 2.38l-4.11 -2.38v-4.75zM1431.5 417.5l4.11 2.38v4.75l-4.11 2.38l-4.11 -2.38v-4.75zM1446.3 417.5l4.11 2.38v4.75l-4.11 2.38l-4.11 -2.38v-4.75zM1461.1 417.5l4.11 2.38v4.75l-4.11 2.38l-4.11 -2.38v-4.75z"/>
</g>
</g>
<g fill="#060606" stroke="#060606" stroke-width="3.1" stroke-linejoin="round">
<path d="M661.2 352.5l4.50 2.60v5.20l-4.50 2.60l-4.50 -2.60v-5.20zM661.2 378.3l4.50 2.60v5.20l-4.50 2.60l-4.50 -2.60v-5.20zM1893.9 352.8l4.29 2.48v4.95l-4.29 2.48l-4.29 -2.48v-4.95zM1893.9 378.6l4.29 2.48v4.95l-4.29 2.48l-4.29 -2.48v-4.95zM1335.2 352.9l4.11 2.38v4.75l-4.11 2.38l-4.11 -2.38v-4.75zM1335.2 378.8l4.11 2.38v4.75l-4.11 2.38l-4.11 -2.38v-4.75zM1364.9 404.6l4.11 2.38v4.75l-4.11 2.38l-4.11 -2.38v-4.75zM1364.9 430.4l4.11 2.38v4.75l-4.11 2.38l-4.11 -2.38v-4.75zM1364.9 456.2l4.11 2.38v4.75l-4.11 2.38l-4.11 -2.38v-4.75zM1059.8 417.5l4.11 2.38v4.75l-4.11 2.38l-4.11 -2.38v-4.75zM1104.6 443.2l4.11 2.38v4.75l-4.11 2.38l-4.11 -2.38v-4.75zM1475.8 417.5l4.11 2.38v4.75l-4.11 2.38l-4.11 -2.38v-4.75zM744.3 442.8l4.50 2.60v5.20l-4.50 2.60l-4.50 -2.60v-5.20zM774.5 442.8l4.50 2.60v5.20l-4.50 2.60l-4.50 -2.60v-5.20zM1703.9 430.2l4.29 2.48v4.95l-4.29 2.48l-4.29 -2.48v-4.95zM1431.5 443.2l4.11 2.38v4.75l-4.11 2.38l-4.11 -2.38v-4.75z"/>
</g>
<rect x="653.2" y="350.1" width="8.3" height="15.2" fill="#d5d7d9"/>
<rect x="653.2" y="375.9" width="8.3" height="15.2" fill="#d5d7d9"/>
<rect x="1894.0" y="350.1" width="7.9" height="15.2" fill="#babcbf"/>
<rect x="1894.0" y="375.9" width="7.9" height="15.2" fill="#babcbf"/>
<rect x="1327.2" y="350.1" width="8.8" height="15.2" fill="#c8cacd"/>
<rect x="1327.2" y="375.9" width="8.8" height="15.2" fill="#c8cacd"/>
<rect x="1356.9" y="401.7" width="7.6" height="15.2" fill="#c7c9cc"/>
<rect x="1356.9" y="427.5" width="7.6" height="15.2" fill="#c7c9cc"/>
<rect x="1356.9" y="453.3" width="7.6" height="15.2" fill="#c7c9cc"/>
<rect x="1051.8" y="414.6" width="10.2" height="15.2" fill="#ced0d2"/>
<rect x="1096.6" y="440.4" width="8.9" height="15.2" fill="#cdcfd2"/>
<rect x="1476.0" y="414.6" width="7.8" height="15.2" fill="#c5c7ca"/>
<rect x="747.5" y="440.4" width="4.8" height="15.2" fill="#d4d6d8"/>
<rect x="766.5" y="440.4" width="9.5" height="15.2" fill="#d3d5d7"/>
<rect x="1695.9" y="427.5" width="5.6" height="15.2" fill="#bfc1c4"/>
<rect x="1428.0" y="440.4" width="11.5" height="15.2" fill="#c6c8cb"/>
<rect x="631.4" y="342.4" width="16.2" height="8" rx="1" fill="#161616"/>
<rect x="634.5" y="345.0" width="9" height="2.6" fill="#555"/>
<circle cx="652" cy="347.0" r="1.6" fill="#444"/>
<rect x="631.4" y="359.1" width="16.2" height="8" rx="1" fill="#161616"/>
<rect x="634.5" y="361.70000000000005" width="9" height="2.6" fill="#555"/>
<circle cx="652" cy="363.70000000000005" r="1.6" fill="#444"/>
<rect x="631.4" y="373.6" width="16.2" height="8" rx="1" fill="#161616"/>
<rect x="634.5" y="376.20000000000005" width="9" height="2.6" fill="#555"/>
<circle cx="652" cy="378.20000000000005" r="1.6" fill="#444"/>
<rect x="631.4" y="388.0" width="16.2" height="8" rx="1" fill="#161616"/>
<rect x="634.5" y="390.6" width="9" height="2.6" fill="#555"/>
<circle cx="652" cy="392.6" r="1.6" fill="#444"/>
<text x="634.5" y="452.5" font-family="Liberation Sans, sans-serif" font-size="7.6" font-weight="bold" fill="#5f6164" textLength="70">UCSX-S9108-100G</text>
<rect x="621" y="447" width="7.6" height="8.5" fill="#0b0b0b"/>
<circle cx="762.3" cy="441" r="4.2" fill="#a9a59b" stroke="#2b2b29" stroke-width="2.4"/>
<circle cx="761.6" cy="455.3" r="4.6" fill="#d6d8da" stroke="#20242a" stroke-width="2"/>
<rect x="760.9" y="449.5" width="1.4" height="4" fill="#2d3136"/>
<circle cx="851" cy="425.2" r="5.8" fill="url(#led)"/>
<circle cx="851" cy="442.7" r="5.8" fill="url(#led)"/>
<circle cx="1034.4" cy="425.2" r="5.8" fill="url(#led)"/>
<circle cx="1034.4" cy="441.9" r="5.8" fill="url(#led)"/>
<circle cx="1503.2" cy="425.2" r="5.8" fill="url(#led)"/>
<circle cx="1503.2" cy="442.7" r="5.8" fill="url(#led)"/>
<circle cx="1682.7" cy="425.2" r="5.8" fill="url(#led)"/>
<circle cx="1682.7" cy="441.1" r="5.8" fill="url(#led)"/>
<circle cx="1081.9" cy="443.9" r="14.5" fill="#dfe1e3" opacity=".75"/>
<circle cx="1081.9" cy="443.9" r="7.6" fill="#c2c4c6" stroke="#1c1c1c" stroke-width="2.7"/>
<circle cx="1081.9" cy="443.9" r="3.3" fill="#151515"/>
<circle cx="1456.4" cy="443.6" r="14.5" fill="#dfe1e3" opacity=".75"/>
<circle cx="1456.4" cy="443.6" r="7.6" fill="#c2c4c6" stroke="#1c1c1c" stroke-width="2.7"/>
<circle cx="1456.4" cy="443.6" r="3.3" fill="#151515"/>
<circle cx="1838.0" cy="428.4" r="14.5" fill="#dfe1e3" opacity=".75"/>
<circle cx="1838.0" cy="428.4" r="7.6" fill="#c2c4c6" stroke="#1c1c1c" stroke-width="2.7"/>
<circle cx="1838.0" cy="428.4" r="3.3" fill="#151515"/>
<rect x="863.5" y="363" width="70.1" height="89.8" fill="#bdbab3"/>
<rect x="863.5" y="363" width="1.6" height="89.8" fill="#2a2a2a"/>
<rect x="929.4" y="365" width="4.2" height="86" fill="#8b8b89"/>
<circle cx="931.5" cy="377" r="1" fill="#2a2a2a"/>
<circle cx="931.5" cy="389" r="1" fill="#2a2a2a"/>
<circle cx="931.5" cy="401" r="1" fill="#2a2a2a"/>
<circle cx="931.5" cy="413" r="1" fill="#2a2a2a"/>
<circle cx="931.5" cy="425" r="1" fill="#2a2a2a"/>
<circle cx="931.5" cy="437" r="1" fill="#2a2a2a"/>
<rect x="865.1" y="366.2" width="64.3" height="29" fill="#070707"/>
<rect x="865.1" y="419.8" width="64.3" height="29.6" fill="#070707"/>
<rect x="864.5" y="395.6" width="65.5" height="23.8" fill="#9b9995"/>
<rect x="868.7" y="398" width="5.4" height="4.4" fill="#1d1d1c"/>
<rect x="868.7" y="404.6" width="5.4" height="6.4" fill="#1d1d1c"/>
<rect x="868.7" y="413.2" width="5.4" height="4.4" fill="#1d1d1c"/>
<rect x="877.3" y="398" width="5.4" height="4.4" fill="#1d1d1c"/>
<rect x="877.3" y="404.6" width="5.4" height="6.4" fill="#1d1d1c"/>
<rect x="877.3" y="413.2" width="5.4" height="4.4" fill="#1d1d1c"/>
<rect x="885.9" y="398" width="5.4" height="4.4" fill="#1d1d1c"/>
<rect x="885.9" y="404.6" width="5.4" height="6.4" fill="#1d1d1c"/>
<rect x="885.9" y="413.2" width="5.4" height="4.4" fill="#1d1d1c"/>
<rect x="894.5" y="398" width="5.4" height="4.4" fill="#1d1d1c"/>
<rect x="894.5" y="404.6" width="5.4" height="6.4" fill="#1d1d1c"/>
<rect x="894.5" y="413.2" width="5.4" height="4.4" fill="#1d1d1c"/>
<rect x="903.2" y="398" width="5.4" height="4.4" fill="#1d1d1c"/>
<rect x="903.2" y="404.6" width="5.4" height="6.4" fill="#1d1d1c"/>
<rect x="903.2" y="413.2" width="5.4" height="4.4" fill="#1d1d1c"/>
<rect x="911.8" y="398" width="5.4" height="4.4" fill="#1d1d1c"/>
<rect x="911.8" y="404.6" width="5.4" height="6.4" fill="#1d1d1c"/>
<rect x="911.8" y="413.2" width="5.4" height="4.4" fill="#1d1d1c"/>
<rect x="920.4" y="398" width="5.4" height="4.4" fill="#1d1d1c"/>
<rect x="920.4" y="404.6" width="5.4" height="6.4" fill="#1d1d1c"/>
<rect x="920.4" y="413.2" width="5.4" height="4.4" fill="#1d1d1c"/>
<circle cx="865.0" cy="364.5" r="1.9" fill="#141414"/>
<circle cx="932.1" cy="364.5" r="1.9" fill="#141414"/>
<circle cx="865.0" cy="451.3" r="1.9" fill="#141414"/>
<circle cx="932.1" cy="451.3" r="1.9" fill="#141414"/>
<rect x="870.4" y="363.6" width="1.4" height="2" fill="#5a5a58"/>
<rect x="870.4" y="450" width="1.4" height="2" fill="#5a5a58"/>
<rect x="880.9" y="363.6" width="1.4" height="2" fill="#5a5a58"/>
<rect x="880.9" y="450" width="1.4" height="2" fill="#5a5a58"/>
<rect x="891.3" y="363.6" width="1.4" height="2" fill="#5a5a58"/>
<rect x="891.3" y="450" width="1.4" height="2" fill="#5a5a58"/>
<rect x="901.8" y="363.6" width="1.4" height="2" fill="#5a5a58"/>
<rect x="901.8" y="450" width="1.4" height="2" fill="#5a5a58"/>
<rect x="912.2" y="363.6" width="1.4" height="2" fill="#5a5a58"/>
<rect x="912.2" y="450" width="1.4" height="2" fill="#5a5a58"/>
<rect x="922.7" y="363.6" width="1.4" height="2" fill="#5a5a58"/>
<rect x="922.7" y="450" width="1.4" height="2" fill="#5a5a58"/>
<rect x="949.6" y="363" width="69.8" height="89.8" fill="#bdbab3"/>
<rect x="949.6" y="363" width="1.6" height="89.8" fill="#2a2a2a"/>
<rect x="1015.2" y="365" width="4.2" height="86" fill="#8b8b89"/>
<circle cx="1017.3" cy="377" r="1" fill="#2a2a2a"/>
<circle cx="1017.3" cy="389" r="1" fill="#2a2a2a"/>
<circle cx="1017.3" cy="401" r="1" fill="#2a2a2a"/>
<circle cx="1017.3" cy="413" r="1" fill="#2a2a2a"/>
<circle cx="1017.3" cy="425" r="1" fill="#2a2a2a"/>
<circle cx="1017.3" cy="437" r="1" fill="#2a2a2a"/>
<rect x="951.2" y="366.2" width="64.0" height="29" fill="#070707"/>
<rect x="951.2" y="419.8" width="64.0" height="29.6" fill="#070707"/>
<rect x="950.6" y="395.6" width="65.2" height="23.8" fill="#9b9995"/>
<rect x="954.8" y="398" width="5.4" height="4.4" fill="#1d1d1c"/>
<rect x="954.8" y="404.6" width="5.4" height="6.4" fill="#1d1d1c"/>
<rect x="954.8" y="413.2" width="5.4" height="4.4" fill="#1d1d1c"/>
<rect x="963.4" y="398" width="5.4" height="4.4" fill="#1d1d1c"/>
<rect x="963.4" y="404.6" width="5.4" height="6.4" fill="#1d1d1c"/>
<rect x="963.4" y="413.2" width="5.4" height="4.4" fill="#1d1d1c"/>
<rect x="971.9" y="398" width="5.4" height="4.4" fill="#1d1d1c"/>
<rect x="971.9" y="404.6" width="5.4" height="6.4" fill="#1d1d1c"/>
<rect x="971.9" y="413.2" width="5.4" height="4.4" fill="#1d1d1c"/>
<rect x="980.5" y="398" width="5.4" height="4.4" fill="#1d1d1c"/>
<rect x="980.5" y="404.6" width="5.4" height="6.4" fill="#1d1d1c"/>
<rect x="980.5" y="413.2" width="5.4" height="4.4" fill="#1d1d1c"/>
<rect x="989.1" y="398" width="5.4" height="4.4" fill="#1d1d1c"/>
<rect x="989.1" y="404.6" width="5.4" height="6.4" fill="#1d1d1c"/>
<rect x="989.1" y="413.2" width="5.4" height="4.4" fill="#1d1d1c"/>
<rect x="997.6" y="398" width="5.4" height="4.4" fill="#1d1d1c"/>
<rect x="997.6" y="404.6" width="5.4" height="6.4" fill="#1d1d1c"/>
<rect x="997.6" y="413.2" width="5.4" height="4.4" fill="#1d1d1c"/>
<rect x="1006.2" y="398" width="5.4" height="4.4" fill="#1d1d1c"/>
<rect x="1006.2" y="404.6" width="5.4" height="6.4" fill="#1d1d1c"/>
<rect x="1006.2" y="413.2" width="5.4" height="4.4" fill="#1d1d1c"/>
<circle cx="951.1" cy="364.5" r="1.9" fill="#141414"/>
<circle cx="1017.9" cy="364.5" r="1.9" fill="#141414"/>
<circle cx="951.1" cy="451.3" r="1.9" fill="#141414"/>
<circle cx="1017.9" cy="451.3" r="1.9" fill="#141414"/>
<rect x="956.5" y="363.6" width="1.4" height="2" fill="#5a5a58"/>
<rect x="956.5" y="450" width="1.4" height="2" fill="#5a5a58"/>
<rect x="966.9" y="363.6" width="1.4" height="2" fill="#5a5a58"/>
<rect x="966.9" y="450" width="1.4" height="2" fill="#5a5a58"/>
<rect x="977.3" y="363.6" width="1.4" height="2" fill="#5a5a58"/>
<rect x="977.3" y="450" width="1.4" height="2" fill="#5a5a58"/>
<rect x="987.7" y="363.6" width="1.4" height="2" fill="#5a5a58"/>
<rect x="987.7" y="450" width="1.4" height="2" fill="#5a5a58"/>
<rect x="998.1" y="363.6" width="1.4" height="2" fill="#5a5a58"/>
<rect x="998.1" y="450" width="1.4" height="2" fill="#5a5a58"/>
<rect x="1008.5" y="363.6" width="1.4" height="2" fill="#5a5a58"/>
<rect x="1008.5" y="450" width="1.4" height="2" fill="#5a5a58"/>
<rect x="1517" y="363" width="68.6" height="89.8" fill="#bdbab3"/>
<rect x="1585.0" y="363" width="0.6" height="89.8" fill="#2a2a2a"/>
<rect x="1517" y="365" width="3.8" height="86" fill="#8b8b89"/>
<circle cx="1518.9" cy="377" r="1" fill="#2a2a2a"/>
<circle cx="1518.9" cy="389" r="1" fill="#2a2a2a"/>
<circle cx="1518.9" cy="401" r="1" fill="#2a2a2a"/>
<circle cx="1518.9" cy="413" r="1" fill="#2a2a2a"/>
<circle cx="1518.9" cy="425" r="1" fill="#2a2a2a"/>
<circle cx="1518.9" cy="437" r="1" fill="#2a2a2a"/>
<rect x="1520.8" y="366.2" width="64.2" height="29" fill="#070707"/>
<rect x="1520.8" y="419.8" width="64.2" height="29.6" fill="#070707"/>
<rect x="1520.2" y="395.6" width="65.4" height="23.8" fill="#d6d2c6"/>
<rect x="1524.4" y="399.1" width="5.4" height="5.9" fill="#2a2622"/>
<rect x="1524.4" y="408.1" width="5.4" height="6.4" fill="#2a2622"/>
<rect x="1533.0" y="399.1" width="5.4" height="5.9" fill="#2a2622"/>
<rect x="1533.0" y="408.1" width="5.4" height="6.4" fill="#2a2622"/>
<rect x="1541.6" y="399.1" width="5.4" height="5.9" fill="#2a2622"/>
<rect x="1541.6" y="408.1" width="5.4" height="6.4" fill="#2a2622"/>
<rect x="1550.2" y="399.1" width="5.4" height="5.9" fill="#2a2622"/>
<rect x="1550.2" y="408.1" width="5.4" height="6.4" fill="#2a2622"/>
<rect x="1558.8" y="399.1" width="5.4" height="5.9" fill="#2a2622"/>
<rect x="1558.8" y="408.1" width="5.4" height="6.4" fill="#2a2622"/>
<rect x="1567.4" y="399.1" width="5.4" height="5.9" fill="#2a2622"/>
<rect x="1567.4" y="408.1" width="5.4" height="6.4" fill="#2a2622"/>
<rect x="1576.0" y="399.1" width="5.4" height="5.9" fill="#2a2622"/>
<rect x="1576.0" y="408.1" width="5.4" height="6.4" fill="#2a2622"/>
<circle cx="1518.5" cy="364.5" r="1.9" fill="#141414"/>
<circle cx="1584.1" cy="364.5" r="1.9" fill="#141414"/>
<circle cx="1518.5" cy="451.3" r="1.9" fill="#141414"/>
<circle cx="1584.1" cy="451.3" r="1.9" fill="#141414"/>
<rect x="1526.1" y="363.6" width="1.4" height="2" fill="#5a5a58"/>
<rect x="1526.1" y="450" width="1.4" height="2" fill="#5a5a58"/>
<rect x="1536.5" y="363.6" width="1.4" height="2" fill="#5a5a58"/>
<rect x="1536.5" y="450" width="1.4" height="2" fill="#5a5a58"/>
<rect x="1547.0" y="363.6" width="1.4" height="2" fill="#5a5a58"/>
<rect x="1547.0" y="450" width="1.4" height="2" fill="#5a5a58"/>
<rect x="1557.4" y="363.6" width="1.4" height="2" fill="#5a5a58"/>
<rect x="1557.4" y="450" width="1.4" height="2" fill="#5a5a58"/>
<rect x="1567.9" y="363.6" width="1.4" height="2" fill="#5a5a58"/>
<rect x="1567.9" y="450" width="1.4" height="2" fill="#5a5a58"/>
<rect x="1578.3" y="363.6" width="1.4" height="2" fill="#5a5a58"/>
<rect x="1578.3" y="450" width="1.4" height="2" fill="#5a5a58"/>
<rect x="1601" y="363" width="68.6" height="89.8" fill="#bdbab3"/>
<rect x="1669.0" y="363" width="0.6" height="89.8" fill="#2a2a2a"/>
<rect x="1601" y="365" width="3.8" height="86" fill="#8b8b89"/>
<circle cx="1602.9" cy="377" r="1" fill="#2a2a2a"/>
<circle cx="1602.9" cy="389" r="1" fill="#2a2a2a"/>
<circle cx="1602.9" cy="401" r="1" fill="#2a2a2a"/>
<circle cx="1602.9" cy="413" r="1" fill="#2a2a2a"/>
<circle cx="1602.9" cy="425" r="1" fill="#2a2a2a"/>
<circle cx="1602.9" cy="437" r="1" fill="#2a2a2a"/>
<rect x="1604.8" y="366.2" width="64.2" height="29" fill="#070707"/>
<rect x="1604.8" y="419.8" width="64.2" height="29.6" fill="#070707"/>
<rect x="1604.2" y="395.6" width="65.4" height="23.8" fill="#d6d2c6"/>
<rect x="1608.4" y="399.1" width="5.4" height="5.9" fill="#2a2622"/>
<rect x="1608.4" y="408.1" width="5.4" height="6.4" fill="#2a2622"/>
<rect x="1617.0" y="399.1" width="5.4" height="5.9" fill="#2a2622"/>
<rect x="1617.0" y="408.1" width="5.4" height="6.4" fill="#2a2622"/>
<rect x="1625.6" y="399.1" width="5.4" height="5.9" fill="#2a2622"/>
<rect x="1625.6" y="408.1" width="5.4" height="6.4" fill="#2a2622"/>
<rect x="1634.2" y="399.1" width="5.4" height="5.9" fill="#2a2622"/>
<rect x="1634.2" y="408.1" width="5.4" height="6.4" fill="#2a2622"/>
<rect x="1642.8" y="399.1" width="5.4" height="5.9" fill="#2a2622"/>
<rect x="1642.8" y="408.1" width="5.4" height="6.4" fill="#2a2622"/>
<rect x="1651.4" y="399.1" width="5.4" height="5.9" fill="#2a2622"/>
<rect x="1651.4" y="408.1" width="5.4" height="6.4" fill="#2a2622"/>
<rect x="1660.0" y="399.1" width="5.4" height="5.9" fill="#2a2622"/>
<rect x="1660.0" y="408.1" width="5.4" height="6.4" fill="#2a2622"/>
<circle cx="1602.5" cy="364.5" r="1.9" fill="#141414"/>
<circle cx="1668.1" cy="364.5" r="1.9" fill="#141414"/>
<circle cx="1602.5" cy="451.3" r="1.9" fill="#141414"/>
<circle cx="1668.1" cy="451.3" r="1.9" fill="#141414"/>
<rect x="1610.1" y="363.6" width="1.4" height="2" fill="#5a5a58"/>
<rect x="1610.1" y="450" width="1.4" height="2" fill="#5a5a58"/>
<rect x="1620.5" y="363.6" width="1.4" height="2" fill="#5a5a58"/>
<rect x="1620.5" y="450" width="1.4" height="2" fill="#5a5a58"/>
<rect x="1631.0" y="363.6" width="1.4" height="2" fill="#5a5a58"/>
<rect x="1631.0" y="450" width="1.4" height="2" fill="#5a5a58"/>
<rect x="1641.4" y="363.6" width="1.4" height="2" fill="#5a5a58"/>
<rect x="1641.4" y="450" width="1.4" height="2" fill="#5a5a58"/>
<rect x="1651.9" y="363.6" width="1.4" height="2" fill="#5a5a58"/>
<rect x="1651.9" y="450" width="1.4" height="2" fill="#5a5a58"/>
<rect x="1662.3" y="363.6" width="1.4" height="2" fill="#5a5a58"/>
<rect x="1662.3" y="450" width="1.4" height="2" fill="#5a5a58"/>
<rect x="866.5" y="401" width="2.2" height="12" fill="#e6e6e4"/>
<rect x="952.6" y="401" width="2.2" height="12" fill="#e6e6e4"/>
<rect x="938.4" y="373.2" width="3.4" height="3" fill="#2c2c2c"/><rect x="943" y="373.0" width="2.6" height="3.4" fill="#4a4a4a"/>
<rect x="938.4" y="388.5" width="3.4" height="3" fill="#2c2c2c"/><rect x="943" y="388.3" width="2.6" height="3.4" fill="#4a4a4a"/>
<rect x="938.4" y="426.3" width="3.4" height="3" fill="#2c2c2c"/><rect x="943" y="426.1" width="2.6" height="3.4" fill="#4a4a4a"/>
<rect x="938.4" y="441.2" width="3.4" height="3" fill="#2c2c2c"/><rect x="943" y="441.0" width="2.6" height="3.4" fill="#4a4a4a"/>
<rect x="1590.4" y="372.6" width="3.4" height="3" fill="#2c2c2c"/><rect x="1595" y="372.40000000000003" width="2.6" height="3.4" fill="#4a4a4a"/>
<rect x="1590.4" y="386.4" width="3.4" height="3" fill="#2c2c2c"/><rect x="1595" y="386.2" width="2.6" height="3.4" fill="#4a4a4a"/>
<rect x="1590.4" y="423.6" width="3.4" height="3" fill="#2c2c2c"/><rect x="1595" y="423.40000000000003" width="2.6" height="3.4" fill="#4a4a4a"/>
<rect x="1590.4" y="438.5" width="3.4" height="3" fill="#2c2c2c"/><rect x="1595" y="438.3" width="2.6" height="3.4" fill="#4a4a4a"/>
<rect x="1257.8" y="363.1" width="61.7" height="89.1" fill="#8a8470"/>
<rect x="1259.4" y="364.7" width="58.5" height="85.9" fill="#3e3b34"/>
<rect x="1261" y="364.7" width="55" height="3" fill="#a8a69c"/>
<rect x="1266.5" y="364.9" width="8.8" height="9.3" fill="#7fc66b"/>
<rect x="1303.2" y="364.9" width="9.3" height="9.3" fill="#7fc66b"/>
<rect x="1275.3" y="366.5" width="28" height="8" fill="#141414"/>
<rect x="1268.3" y="374.2" width="42" height="24.5" fill="#0e0e0e"/>
<rect x="1273" y="381.5" width="32.5" height="12.5" fill="#2c2c2c"/>
<rect x="1266.5" y="399.2" width="46" height="17.6" fill="#696965"/>
<rect x="1268.3" y="399.2" width="42" height="1.6" fill="#9c9c98"/>
<rect x="1270" y="414.6" width="39" height="1.6" fill="#8a8a86"/>
<rect x="1268.3" y="417.9" width="43" height="29.1" fill="#0e0e0e"/>
<rect x="1273" y="424" width="32" height="10" fill="#242424"/>
<rect x="1283" y="436" width="14" height="11" fill="#2d2d2d"/>
<rect x="1266.5" y="439.4" width="12.3" height="2.9" fill="#d5d5d0"/>
<rect x="1299.7" y="439.4" width="12.3" height="2.9" fill="#d5d5d0"/>
<rect x="1259.4" y="447.6" width="58.5" height="3" fill="#6b6759"/>
<path d="M1325.5 381.8h3.400v3.200h-3.400zM1322.800 387.700h3.400v3.400h-3.400zM1328.300 387.700h3.400v3.400h-3.400zM1326.700 385h1v2.700h-1z" fill="#222"/>
<rect x="1323.200" y="424.100" width="8.700" height="8.500" fill="#dfe0e1" stroke="#808284" stroke-width="1"/>
<path d="M1324.500 426.500h4v2h2.500" stroke="#8a8c8e" stroke-width=".8" fill="none"/>
<rect x="1336.400" y="405.100" width="19.800" height="44.200" rx="1.500" fill="#15151d"/>
<rect x="1344.500" y="408" width="8.200" height="37.200" rx="1" fill="#2d86dc"/>
<rect x="1339.200" y="409" width="4" height="36" fill="#07070f"/>
<rect x="1341.600" y="422.5" width="1.200" height="2" fill="#c8c8d8"/>
<rect x="1341.600" y="430.7" width="1.200" height="2" fill="#c8c8d8"/>
<rect x="1341.600" y="437.7" width="1.200" height="2" fill="#c8c8d8"/>
<path d="M1338 458.600h18.500M1353.500 456.400l4.200 2.200-4.200 2.200zM1342.500 458.600l3.800-3.600h4M1345 458.600l3.500 3.600h3.600" stroke="#1e1e1e" stroke-width="1.500" fill="none"/><circle cx="1338" cy="458.600" r="2" fill="#1e1e1e"/><rect x="1349.800" y="453.500" width="3" height="3" fill="#1e1e1e"/><circle cx="1352.800" cy="462.200" r="1.500" fill="#1e1e1e"/>
<path d="M1879 421.6h5v-2.4l4 1.6 6.5 2.9-6.5 2.9-4 1.6v-2.4h-5z" fill="#1b1b1b"/><rect x="1874" y="415.5" width="2.4" height="2.4" fill="#222"/><rect x="1874" y="420" width="2.4" height="2.4" fill="#222"/><rect x="1874" y="424.5" width="2.4" height="2.4" fill="#222"/><rect x="1874" y="429" width="2.4" height="2.4" fill="#222"/>
<rect x="1894" y="337.6" width="6" height="125" fill="#b4b6b8"/>
<rect x="1896.4" y="443" width="3.6" height="10" fill="#111"/>
<path d="M621 462.600H1162V471H1408V462.600H1900V476H621z" fill="#dcdad4"/>
<rect x="1507.3" y="461" width="9" height="2.8" rx="1" fill="#111"/>
<rect x="1522.0" y="461" width="9" height="2.8" rx="1" fill="#111"/>
<rect x="1536.6" y="461" width="9" height="2.8" rx="1" fill="#111"/>
<rect x="1551.3" y="461" width="9" height="2.8" rx="1" fill="#111"/>
<rect x="1565.9" y="461" width="9" height="2.8" rx="1" fill="#111"/>
<rect x="1580.6" y="461" width="9" height="2.8" rx="1" fill="#111"/>
<rect x="1595.3" y="461" width="9" height="2.8" rx="1" fill="#111"/>
<rect x="1609.9" y="461" width="9" height="2.8" rx="1" fill="#111"/>
<rect x="1624.6" y="461" width="9" height="2.8" rx="1" fill="#111"/>
<rect x="1639.2" y="461" width="9" height="2.8" rx="1" fill="#111"/>
<rect x="1653.9" y="461" width="9" height="2.8" rx="1" fill="#111"/>
<rect x="1710.5" y="458.5" width="9.5" height="4.5" rx="2" fill="#111"/>
<rect x="1725.3" y="458.5" width="9.5" height="4.5" rx="2" fill="#111"/>
<rect x="1740.1" y="458.5" width="9.5" height="4.5" rx="2" fill="#111"/>
<rect x="1754.9" y="458.5" width="9.5" height="4.5" rx="2" fill="#111"/>
<rect x="1769.7" y="458.5" width="9.5" height="4.5" rx="2" fill="#111"/>
<rect x="677.0" y="0" width="0" height="0"/>
<rect x="691.8" y="0" width="0" height="0"/>
<rect x="706.6" y="0" width="0" height="0"/>
<rect x="721.4" y="0" width="0" height="0"/>
<rect x="736.2" y="0" width="0" height="0"/>
<rect x="751.0" y="0" width="0" height="0"/>
<rect x="765.8" y="0" width="0" height="0"/>
<rect x="780.6" y="0" width="0" height="0"/>
<path d="M621 455.5h8v4l3 2.5v13h-11z" fill="#0a0a0a"/>
<path d="M629 456l111 9.5v9.5H629z" fill="#0d0d0d"/>
<path d="M630 457.5l8 .5h64l38 6.4v6.4l-110-11z" fill="#dcdcd9"/>
<rect x="638" y="458.6" width="64" height="1.2" fill="#3a3a3a"/>
<rect x="738" y="470.6" width="180" height="4.4" fill="#1f1f1d"/>
<rect x="918" y="470.6" width="112" height="4.4" fill="#77756f"/>
<rect x="740" y="464.4" width="290" height="6.8" fill="#cfcac0"/>
<rect x="1029" y="462" width="37" height="10.5" rx="4" fill="#c7c1b3" stroke="#7d786c" stroke-width="1"/>
<rect x="1066" y="465.5" width="35" height="5" fill="#8f8a7e"/>
<rect x="1077.6" y="459.3" width="21.5" height="1.6" fill="#161616"/>
<rect x="1101" y="458.6" width="61" height="15.6" rx="3" fill="#c3c3c1"/>
<rect x="1162" y="470.5" width="270" height="4.5" fill="#e9e9e8"/>
<rect x="1437" y="458" width="32" height="4" fill="#151515"/>
<path d="M1420 462.6h70l18 12.4h-88z" fill="#b3b3b0"/>
<path d="M1476 465h64v9h-50z" fill="#3a342c"/>
<rect x="1540" y="471.6" width="253" height="3.4" fill="#1c1a18"/>
<rect x="1540" y="465" width="253" height="2" fill="#8a867c"/>
<path d="M1793 466.5l106-2.5v11h-106z" fill="#0c0c0c"/>
<rect x="1826.5" y="456.6" width="27.5" height="1.3" fill="#55575a"/>
</g>
</svg><!--HW1-->

<!-- SCROLLBAR -->
<div class="abs" style="left:621px;top:506px;width:1279px;height:16px;background:#ededed"></div>

<!-- TABLE -->
<div class="abs" style="left:703px;top:586px;width:1px;height:18px;background:#dfe6f1"></div>
<div class="abs" style="left:632px;top:619px;width:17px;height:17px;border:1.5px solid #565c68;border-radius:3.5px;background:#fff"></div>
<div class="th" style="left:1011px">ID</div>
<div class="th" style="left:1068px">Role</div>
<div class="th" style="left:1470px">Ports</div>
<div class="abs" style="left:621px;top:640.500px;width:1279px;height:1.500px;background:#7d828e"></div>
<div class="abs" style="left:1060px;top:682px;width:400px;text-align:center;font-size:16px;color:#6a7180;letter-spacing:0.100px">NO ITEMS AVAILABLE</div>

<svg class="abs" style="left:249px;top:132px" width="1736" height="752" viewBox="249 132 1736 752" fill="none" stroke-linecap="round" stroke-linejoin="round">
  <g stroke="#2f6fd0" stroke-width="1.300"><circle cx="273.700" cy="164.500" r="10.300"/><circle cx="273.700" cy="207.500" r="10.300"/><circle cx="273.700" cy="250.500" r="10.300"/>
  <path d="M269.300 164.800l3.100 3 6-6.400M269.300 207.800l3.100 3 6-6.400M269.300 250.800l3.100 3 6-6.400" stroke-width="1.500"/></g>
  <circle cx="273.700" cy="293.300" r="10.800" fill="#1f69cd"/>
  <text x="273.700" y="298" text-anchor="middle" font-family="Liberation Sans, sans-serif" font-size="13.500" font-weight="bold" fill="#fff">4</text>
  <path d="M507 850l-5.200 4.800 5.200 4.800" stroke="#7b7f88" stroke-width="1.400"/>
  <!-- toolbar icons -->
  <g stroke="#b9bcc2" stroke-width="1.100">
    <path d="M634.500 601.500l1-3.600 9.200-9.200 2.600 2.600-9.200 9.200zM643.400 590l2.600 2.600"/>
    <path d="M676 590.700h10M678.700 590.500v-1.800h4.600v1.800M677 590.700v10.600h8v-10.600M679.700 593v6.400M682.300 593v6.400"/>
    <path d="M634.500 767.500l1-3.600 9.200-9.200 2.600 2.600-9.200 9.200zM643.400 756l2.600 2.600"/>
    <path d="M676 756.700h10M678.700 756.500v-1.800h4.600v1.800M677 756.700v10.600h8v-10.600M679.700 759v6.400M682.300 759v6.400"/>
  </g>
  <g fill="#8d929c"><path d="M1037.400 624.600l1.500-1.800 1.500 1.800zM1037.400 629l1.500 1.800 1.500-1.800zM1440.200 624.600l1.500-1.800 1.500 1.800zM1440.200 629l1.500 1.800 1.500-1.800z"/></g>
  <g stroke="#7d828c" stroke-width="1.100"><circle cx="1881.500" cy="625.400" r="2.600"/>
  <path d="M1880.200 618.300h2.600l.5 2 1.500.8 1.900-.7 1.300 2.200-1.500 1.400v1.800l1.500 1.400-1.300 2.200-1.900-.7-1.500.8-.5 2h-2.600l-.5-2-1.500-.8-1.900.7-1.300-2.200 1.500-1.400v-1.800l-1.500-1.400 1.300-2.200 1.900.7 1.500-.8z"/></g>
  <!-- scrollbar arrows -->
  <g stroke="#4a4a4a" stroke-width="1.500"><path d="M630.500 510.500l-3.200 3.500 3.200 3.500M1889.500 510.500l3.200 3.500-3.200 3.500"/></g>
</svg>
<!-- FOOTER -->
<div class="abs" style="left:535px;top:825px;width:1450px;height:1px;background:#e0e1e4"></div>
<div class="abs" style="left:550px;top:847px;font-size:13.5px;font-weight:bold;color:#2468c8;letter-spacing:-0.300px">Cancel</div>
<div class="abs" style="left:1859px;top:840px;width:54px;height:31px;border:1.5px solid #2b6bcb;border-radius:5px;background:#fff"></div>
<div class="abs" style="left:1859px;top:848px;width:54px;text-align:center;font-size:13px;font-weight:bold;color:#2468c8;letter-spacing:-0.2px">Back</div>
<div class="abs" style="left:1920px;top:840px;width:51px;height:31px;border-radius:5px;background:#1f69cd"></div>
<div class="abs" style="left:1920px;top:848px;width:51px;text-align:center;font-size:13px;font-weight:bold;color:#fff;letter-spacing:-0.2px">Save</div>

<!-- RIGHT SCROLL STRIP -->
<div class="abs" style="left:1993px;top:50px;width:7px;height:938px;background:linear-gradient(90deg,#e9e9e9,#f3f3f3 40%,#f6f6f6)"></div>
</div>
</body>
</html>
